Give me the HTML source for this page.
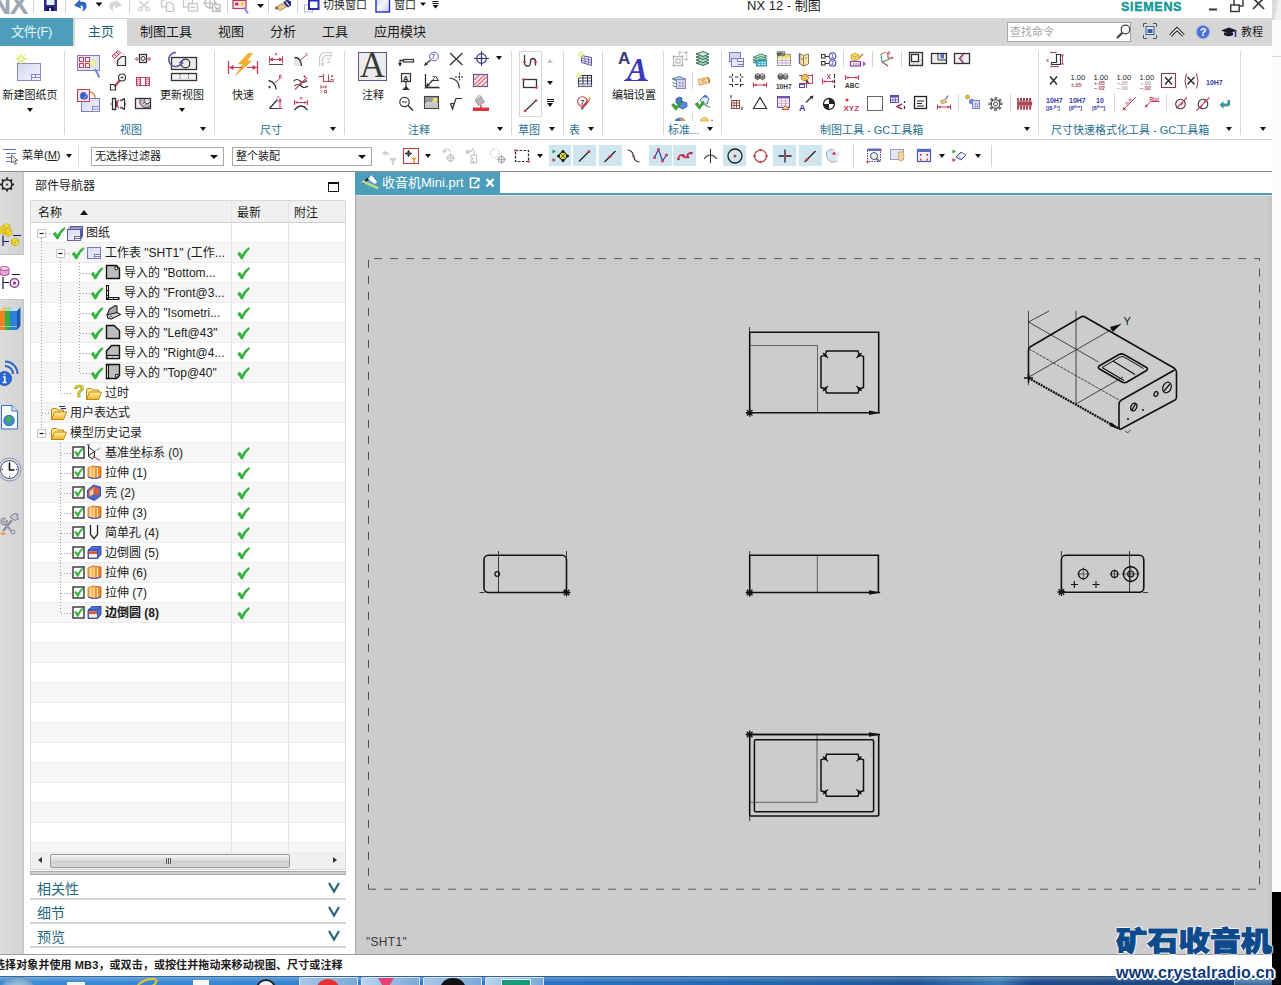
<!DOCTYPE html>
<html lang="zh-CN">
<head>
<meta charset="utf-8">
<title>NX 12 - 制图</title>
<style>
*{box-sizing:border-box;margin:0;padding:0}
html,body{width:1281px;height:985px;overflow:hidden;background:#fff}
body{position:relative;font-family:"Liberation Sans","Noto Sans CJK SC",sans-serif;font-size:12px;color:#1a1a1a}
.abs{position:absolute}
svg{position:absolute;overflow:visible}
/* title bar */
#title{left:0;top:0;width:1272px;height:18px;background:#fff}
#tabbar{left:0;top:18px;width:1272px;height:28px;background:#d6d6d6}
#filetab{left:0;top:18px;width:73px;height:28px;background:#4d9ebb;color:#e8f6fb;font-size:13px;line-height:27px;padding-left:11px;letter-spacing:-.3px}
#hometab{left:75px;top:19px;width:52px;height:28px;background:#fff;color:#1d5f78;font-size:13px;line-height:26px;text-align:center}
.rtab{top:18px;height:28px;font-size:13px;line-height:27px;color:#1a1a1a;white-space:nowrap}
#ribbon{left:0;top:46px;width:1272px;height:94px;background:#fff;border-bottom:1px solid #d0d0d0}
.gsep{top:51px;width:1px;height:84px;background:#d9d9d9}
.glabel{top:123px;font-size:11px;line-height:14px;color:#1f6f8f;white-space:nowrap}
.blabel{font-size:11px;line-height:14px;color:#1a1a1a;white-space:nowrap;text-align:center}
.dd{width:0;height:0;border-left:3.5px solid transparent;border-right:3.5px solid transparent;border-top:4px solid #111}
#selbar{left:0;top:140px;width:1272px;height:32px;background:#fff;border-bottom:1px solid #8a8a8a}
.combo{top:147px;height:19px;border:1px solid #a9a9a9;background:#fff;font-size:12px;line-height:17px;padding-left:3px;white-space:nowrap}
.hl{background:#cfe6ee}
#resbar{left:0;top:172px;width:24px;height:782px;background:linear-gradient(90deg,#dcdcdc,#d2d2d2)}
#nav{left:24px;top:172px;width:331px;height:782px;background:#fff}
#gfx{left:355px;top:195px;width:917px;height:759px;background:#ccc}
#gtabline{left:355px;top:193px;width:917px;height:2px;background:#4d9ebb}
#gtab{left:355px;top:172px;width:145px;height:22px;background:#4d9ebb;color:#fff;font-size:13px;line-height:21px;white-space:nowrap}
#status{left:0;top:954px;width:1272px;height:22px;background:#fff;border-top:1px solid #9c9c9c;font-size:11px;font-weight:bold;line-height:20px;white-space:nowrap;letter-spacing:.1px}
#taskbar{left:0;top:976px;width:1272px;height:9px;background:linear-gradient(#1a3a5a 0,rgba(255,255,255,.25) 14%,rgba(255,255,255,0) 70%),linear-gradient(90deg,#3d8cd6 0,#3582cf 25%,#2a72c0 45%,#2464ac 62%,#1f5596 72%,#3c7cb8 78.500%,#1c4a86 81%,#1b4882 100%);overflow:hidden}
#rightstrip{left:1272px;top:0;width:9px;height:892px;background:#fcfcfc}
.trow{left:31px;width:314px;height:20px}
.tr-a{background:#fff}
.tr-b{background:#f6f6f6}
.tt{font-size:12px;line-height:22px;white-space:nowrap;color:#1a1a1a}
</style>
</head>
<body>
<div class="abs" id="title"></div>
<div class="abs" id="tabbar"></div>
<div class="abs" id="filetab">文件(F)</div>
<div class="abs" id="hometab">主页</div>
<div class="abs rtab" style="left:140px">制图工具</div>
<div class="abs rtab" style="left:218px">视图</div>
<div class="abs rtab" style="left:270px">分析</div>
<div class="abs rtab" style="left:322px">工具</div>
<div class="abs rtab" style="left:374px">应用模块</div>

<!-- ===== title bar ===== -->
<div class="abs" style="left:-9px;top:-11px;font-size:28px;font-weight:bold;color:#9ba8b3;line-height:31px;letter-spacing:-1.500px">NX</div>
<div class="abs" style="left:323px;top:-3.500px;font-size:11px;line-height:16px;white-space:nowrap;color:#222">切换窗口</div>
<div class="abs" style="left:394px;top:-3.500px;font-size:11px;line-height:16px;white-space:nowrap;color:#222">窗口</div>
<div class="abs" style="left:747px;top:-2.500px;font-size:13px;line-height:16px;white-space:nowrap;color:#222">NX 12 - 制图</div>
<div class="abs" style="left:1121px;top:0;font-size:12.500px;font-weight:bold;line-height:14px;letter-spacing:.7px;color:#0f9696;-webkit-text-stroke:.4px #0f9696;white-space:nowrap">SIEMENS</div>
<svg id="tsvg" width="1272" height="18" style="left:0;top:0">
 <g stroke="#d0d0d0" stroke-width="1"><path d="M33.5 0v13M65.5 0v13M129.5 0v13M227.5 0v13M268.5 0v13M297.5 0v13"/></g>
 <!-- save -->
 <path d="M44 0h13v11h-13z" fill="#2b2b8c"/><rect x="46.5" y="0" width="8" height="5" fill="#e8ecff"/><rect x="47" y="7" width="7" height="4" fill="#10104a"/><rect x="49" y="8" width="2" height="3" fill="#c8d0ff"/>
 <!-- undo -->
 <path d="M74 5.500 L80 -.5 L80.500 2 Q86.500 1 86.500 6 Q86.500 9.500 82 11.500 Q84 8 82.500 6 Q81.500 5 80.500 5.500 L81 8.500Z" fill="#2e62c8"/>
 <path d="M95.5 2.5h7l-3.5 4z" fill="#111"/>
 <!-- redo grey -->
 <path d="M122 5.500 L116 -.5 L115.500 2 Q109.500 1 109.500 6 Q109.500 9.500 114 11.500 Q112 8 113.500 6 Q114.500 5 115.500 5.500 L115 8.500Z" fill="#d4d4d4"/>
 <!-- cut -->
 <g stroke="#cecece" stroke-width="1.3" fill="none"><path d="M139 1l8 7M149 1l-8 7"/><circle cx="140.500" cy="9" r="1.800"/><circle cx="147.500" cy="9" r="1.800"/></g>
 <!-- copy -->
 <g stroke="#c4c4c4" stroke-width="1.200" fill="#fafafa"><path d="M161.500 0v7h5M161.500 0h4"/><path d="M166.500 2.500h4.500l2.500 2.500v6.500h-7z"/></g>
 <!-- paste -->
 <g stroke="#c4c4c4" stroke-width="1.200" fill="#fafafa"><rect x="183.500" y="-2" width="9" height="9"/><rect x="188.500" y="3.500" width="9" height="7.500"/><path d="M190.500 7.500h5" /></g>
 <!-- move -->
 <g stroke="#b8b8b8" stroke-width="1.200" fill="none"><circle cx="210" cy="3" r="5"/><path d="M210 -3v12M203 3h14"/><rect x="212.500" y="4.500" width="7.500" height="7" fill="#fafafa"/><path d="M214.500 6.500l3.500 3.500M218 7.500v2.500h-2.500"/></g>
 <g transform="translate(0 1.500)"><!-- prefs icon -->
 <rect x="233" y="-1" width="13" height="8" fill="#f4e8f0" stroke="#b03a5a" stroke-width="1.200"/><rect x="235" y="1" width="3.500" height="3" fill="#d04040"/><rect x="240.500" y="1" width="3.500" height="3" fill="#f0d040"/><path d="M244 6l4 6" stroke="#8a8ad8" stroke-width="2"/>
 <path d="M257 2.500h7l-3.500 4z" fill="#111"/>
 <!-- brush -->
 <path d="M276 6l6-4 5 3-7 4z" fill="#e8c888" stroke="#9a7a4a" stroke-width=".8"/><path d="M283 1l4-3 4 2 0 4-3 2z" fill="#2a2a7a"/><path d="M286 0l3 4" stroke="#fff" stroke-width="1.200"/><circle cx="276.500" cy="6.500" r="1.500" fill="#7a5a3a"/>
 <!-- switch window -->
 <rect x="304.500" y="3.500" width="8" height="7" fill="#fff" stroke="#b8b8c8" stroke-width="1"/><rect x="309" y="-1" width="9.500" height="8.500" fill="#fff" stroke="#2a2ab0" stroke-width="2"/>
 </g><!-- window -->
 <defs><linearGradient id="gw" x1="0" y1="0" x2="1" y2="1"><stop offset="0" stop-color="#c8d4ff"/><stop offset=".5" stop-color="#f4f7ff"/><stop offset="1" stop-color="#b8c8ff"/></linearGradient></defs>
 <rect x="376" y="-2" width="13.500" height="14" fill="url(#gw)" stroke="#2a2ac8" stroke-width="1.400"/>
 <path d="M420 2.500h6l-3 3.500z" fill="#111"/>
 <path d="M432.500 1.500h6M432.500 3.500h6" stroke="#111" stroke-width="1"/><path d="M432.500 5h6l-3 3.500z" fill="#111"/>
 <g transform="translate(0 1)"><!-- window controls -->
 <path d="M1209 8.500h8" stroke="#333" stroke-width="2"/>
 <rect x="1234" y="-2" width="9" height="7" fill="#fff" stroke="#333" stroke-width="1.400"/><rect x="1230.700" y="4" width="8.500" height="6.500" fill="#fff" stroke="#333" stroke-width="1.400"/>
 <path d="M1253 -3l11 11M1264 -3l-11 11" stroke="#333" stroke-width="1.700"/></g>
</svg>
<!-- ===== tab bar right side ===== -->
<div class="abs" style="left:1007px;top:22px;width:124px;height:20px;background:#fff;border:1px solid #a8a8a8;font-size:11px;line-height:18px;color:#a6a6a6;padding-left:2px">查找命令</div>
<div class="abs" style="left:1241px;top:24px;font-size:11px;line-height:16px;color:#1a1a1a;white-space:nowrap">教程</div>
<svg width="1272" height="46" style="left:0;top:0">
 <g fill="none" stroke="#444" stroke-width="1.300"><circle cx="1125.500" cy="29.500" r="4.300" fill="#fff"/><path d="M1122.300 32.700l-5.300 5.300" stroke-width="2.200"/></g>
 <g fill="none" stroke="#555" stroke-width="1"><path d="M1143.500 27v-3.500h3.500M1153 23.500h3.500v3.500M1156.500 35v3.500h-3.500M1147 38.500h-3.500v-3.500"/></g>
 <rect x="1146" y="26.500" width="8" height="8" fill="#e8eef8" stroke="#3a5a9a" stroke-width="1"/><rect x="1147.500" y="29" width="5" height="4" fill="#3a5aa8"/>
 <path d="M1170.500 35.500l6.500-6.500 6.500 6.500" fill="none" stroke="#222" stroke-width="3.400"/><path d="M1170.500 35.500l6.500-6.500 6.500 6.500" fill="none" stroke="#fff" stroke-width="1.400"/>
 <circle cx="1203" cy="32" r="6.500" fill="#4a6fd0" stroke="#8fa4e8" stroke-width="1"/>
 <path d="M1221 30.500l8-3 8 3-8 3z" fill="#1a1a2a"/><path d="M1224 32.500v2.500q5 2.500 9 0v-2.500" fill="#1a1a2a"/><path d="M1235.500 31v6" stroke="#2a2a9a" stroke-width="1.500"/>
</svg>
<div class="abs" style="left:1199px;top:25px;width:8px;font-size:11px;font-weight:bold;line-height:14px;color:#fff;text-align:center">?</div>
<div class="abs" id="ribbon"></div>

<!-- ===== ribbon labels ===== -->
<div class="abs gsep" style="left:64px"></div>
<div class="abs gsep" style="left:214px"></div>
<div class="abs gsep" style="left:344px"></div>
<div class="abs gsep" style="left:511px"></div>
<div class="abs gsep" style="left:563px"></div>
<div class="abs gsep" style="left:602px"></div>
<div class="abs gsep" style="left:663px"></div>
<div class="abs gsep" style="left:721px"></div>
<div class="abs gsep" style="left:1038px"></div>
<div class="abs gsep" style="left:1240px"></div>
<div class="abs blabel" style="left:0;top:88px;width:60px">新建图纸页</div>
<div class="abs blabel" style="left:152px;top:88px;width:60px">更新视图</div>
<div class="abs blabel" style="left:213px;top:88px;width:60px">快速</div>
<div class="abs blabel" style="left:343px;top:88px;width:60px">注释</div>
<div class="abs blabel" style="left:604px;top:88px;width:60px">编辑设置</div>
<div class="abs glabel" style="left:120px">视图</div>
<div class="abs glabel" style="left:260px">尺寸</div>
<div class="abs glabel" style="left:408px">注释</div>
<div class="abs glabel" style="left:518px">草图</div>
<div class="abs glabel" style="left:569px">表</div>
<div class="abs glabel" style="left:668px">标准...</div>
<div class="abs glabel" style="left:820px">制图工具 - GC工具箱</div>
<div class="abs glabel" style="left:1051px">尺寸快速格式化工具 - GC工具箱</div>
<div class="abs dd" style="left:27px;top:108px"></div>
<div class="abs dd" style="left:179px;top:108px"></div>
<div class="abs dd" style="left:200px;top:127px"></div>
<div class="abs dd" style="left:330px;top:127px"></div>
<div class="abs dd" style="left:497px;top:127px"></div>
<div class="abs dd" style="left:496px;top:56px"></div>
<div class="abs dd" style="left:549px;top:127px"></div>
<div class="abs dd" style="left:588px;top:127px"></div>
<div class="abs dd" style="left:707px;top:127px"></div>
<div class="abs dd" style="left:1024px;top:127px"></div>
<div class="abs dd" style="left:1226px;top:127px"></div>
<div class="abs dd" style="left:1260px;top:127px"></div>
<div class="abs dd" style="left:1260px;top:158px"></div>
<!-- sketch gallery -->
<div class="abs" style="left:519px;top:51px;width:23px;height:66px;border:1px solid #cfd9e0"></div>
<div class="abs dd" style="left:547px;top:59px;border-top:none;border-bottom:4px solid #c4c4c4"></div>
<div class="abs dd" style="left:547px;top:81px"></div>
<div class="abs" style="left:547px;top:99px;width:7px;height:1px;background:#111"></div>
<div class="abs" style="left:547px;top:101px;width:7px;height:1px;background:#111"></div>
<div class="abs dd" style="left:547px;top:103px"></div>
<!-- ===== ribbon icons A ===== -->
<svg width="1272" height="140" style="left:0;top:0">
<defs>
 <linearGradient id="gsheet" x1="0" y1="0" x2="1" y2="1"><stop offset="0" stop-color="#d4d8f0"/><stop offset="1" stop-color="#f3f4fb"/></linearGradient>
 <radialGradient id="gstar"><stop offset="0" stop-color="#ffffd0"/><stop offset=".5" stop-color="#e0e878"/><stop offset="1" stop-color="#c8d860" stop-opacity=".6"/></radialGradient>
 <path id="star8" d="M0-7L1.300-2.500L5.500-5L2.500-1.300L7 0L2.500 1.300L5 5.500L1.300 2.500L0 7L-1.300 2.500L-5 5L-2.500 1.300L-7 0L-2.500-1.300L-5.500-5L-1.300-2.500Z" fill="url(#gstar)"/>
</defs>
<!-- new sheet -->
<rect x="17.500" y="63.500" width="23" height="17" fill="url(#gsheet)" stroke="#8888c4"/>
<rect x="31.500" y="74.500" width="9" height="6" fill="#eef0fa" stroke="#8888c4"/><path d="M31.500 77.500h9M35.500 74.500v3" stroke="#8888c4"/>
<use href="#star8" x="21" y="59"/>
<!-- view wizard -->
<rect x="77.500" y="55.500" width="22" height="15" fill="#e2e5f4" stroke="#7c7cc0"/>
<g fill="#fbeef0" stroke="#c0405a" stroke-width="1"><rect x="79.500" y="57.500" width="4" height="4"/><rect x="85.500" y="57.500" width="4" height="4"/><rect x="79.500" y="63.500" width="4" height="4"/><rect x="85.500" y="63.500" width="4" height="4"/></g>
<use href="#star8" x="93" y="63" transform="translate(93 63) scale(.75) translate(-93 -63)"/>
<path d="M95 69l4.500 8.500" stroke="#7a8ad8" stroke-width="2.200"/>
<!-- base view -->
<rect x="81.500" y="98.500" width="18" height="13" fill="url(#gsheet)" stroke="#7c7cc0"/>
<rect x="92.500" y="106.500" width="7" height="5" fill="#eef0fa" stroke="#8888c4"/><path d="M92.500 109h7" stroke="#8888c4"/>
<path d="M88 92a6 6 0 0 1 7 6" fill="none" stroke="#e0a070" stroke-width="2"/>
<rect x="77.500" y="89.500" width="12" height="12" fill="#f6e4e8" stroke="#c0405a"/>
<path d="M80 96q0-4 4-4 2 0 2 2 2 0 2 2.500 0 3-4 3-4 0-4-3.500z" fill="#3a62c8"/><path d="M84 98l3-2.500" stroke="#9ab4f0" stroke-width="1"/>
<!-- small view icons col1 x=118 -->
<g>
 <path d="M112 56l6-5.500 2.500 2.500-6 5.500z" fill="#f8dde0" stroke="#c0405a" stroke-width="1"/><path d="M114 54l2.500 2.500M116 52l2.500 2.500" stroke="#c0405a" stroke-width="1"/>
 <path d="M117.500 60.500l4-4h4v9h-8z" fill="#f0f0f0" stroke="#333" stroke-width="1.200"/><path d="M113.500 59.500l4 5.500M121.500 52.500l4 4" stroke="#c0405a" stroke-width=".8" stroke-dasharray="1.500 1"/>
</g>
<g>
 <path d="M115 86l6-7" stroke="#c0405a" stroke-width="2.400"/>
 <circle cx="122" cy="77.500" r="3.500" fill="#fff" stroke="#333" stroke-width="1.200"/><path d="M120.500 77.500h3M122 76v3" stroke="#333" stroke-width=".8"/>
 <path d="M110.500 84.500h3l2 2v3.500h-5z" fill="#fff" stroke="#333" stroke-width="1.200"/>
</g>
<g>
 <path d="M110.500 104h2M124 104h2" stroke="#333" stroke-width="1.200"/>
 <path d="M112.500 98.500h3v11h-3z" fill="#fff" stroke="#333" stroke-width="1.300"/><path d="M115.500 100.500q2.500 3.500 0 7" fill="none" stroke="#333" stroke-width="1.300"/>
 <path d="M118.500 99.500q-2.500 4.500 0 9" fill="none" stroke="#c0405a" stroke-width="1.300"/><path d="M120.500 99.500q2.500 4.500 0 9" fill="none" stroke="#c0405a" stroke-width="1.300"/>
 <path d="M121 101l2.500-2h1v10h-1l-2.500-2" fill="#fff" stroke="#333" stroke-width="1.300"/>
</g>
<!-- col2 x=143 -->
<g>
 <rect x="139.500" y="54.500" width="7" height="8" fill="#fff" stroke="#333" stroke-width="1.300"/><circle cx="143" cy="58.500" r="2" fill="#eee" stroke="#333" stroke-width="1"/>
 <path d="M135.500 59h4M146.500 59h4" stroke="#c0405a" stroke-width="1.200"/><path d="M137.500 57l-2 2 2 2M148.500 57l2 2-2 2" fill="none" stroke="#c0405a" stroke-width="1"/>
</g>
<g>
 <rect x="136.500" y="77.500" width="13" height="8" fill="#f3c6cc" stroke="#c0405a"/><rect x="140.500" y="77.500" width="5" height="8" fill="#fff" stroke="#c0405a"/>
 <path d="M137 79.500h3M137 81.500h3M137 83.500h3M146 79.500h3M146 81.500h3M146 83.500h3" stroke="#c0405a" stroke-width=".7" stroke-dasharray="1 1"/>
</g>
<g>
 <rect x="135.500" y="98.500" width="15" height="10" fill="#f5f0f2" stroke="#333" stroke-width="1.300"/>
 <path d="M140.500 99a6 6 0 0 0 9.500 7v-7z" fill="#cbb8c8"/><path d="M140.500 99a6 6 0 0 0 9.500 7" fill="none" stroke="#444" stroke-width="1"/><path d="M144.500 99a3 3 0 0 0 5.500 3" fill="#fff" stroke="#444" stroke-width="1"/>
 <path d="M143 104l3-3M145.500 105.500l3-3" stroke="#6a4a7a" stroke-width=".8"/>
</g>
<!-- update views -->
<rect x="171.500" y="57.500" width="25" height="12" fill="#ececec" stroke="#333" stroke-width="1.300"/>
<circle cx="185.500" cy="63.500" r="4.300" fill="none" stroke="#333" stroke-width="1.300"/>
<path d="M176 52.500a7 7 0 1 0 5.500 11" fill="none" stroke="#5a5ab0" stroke-width="1.500"/><path d="M178.500 63l4-3.500 1 4.500z" fill="#5a5ab0"/>
<rect x="171.500" y="73.500" width="25" height="7" fill="#f2f2f2" stroke="#333" stroke-width="1.300"/><path d="M180 74v6M188.500 74v6" stroke="#555" stroke-width="1" stroke-dasharray="1.500 1.500"/>
<!-- rapid dim -->
<path d="M248 53.500h4.500l-5.500 7.500h4.500l-16 14.500 7.500-11.500h-4.500z" fill="#f2b232" stroke="#e89820" stroke-width=".6"/>
<path d="M228.500 61v13M257.500 61v13" stroke="#c0405a" stroke-width="1.300"/><path d="M229 67.500h13M247 67.500h10" stroke="#c0405a" stroke-width="1.200"/>
<path d="M229 67.500l4.500-2.500v5zM257 67.500l-4.500-2.500v5z" fill="#c0405a"/>
<!-- dim small col1 x=276 -->
<g stroke="#c0405a" fill="none" stroke-width="1"><path d="M269.500 56v7M282.500 56v7M270 59.500h12"/><path d="M270 59.500l2.500-1.500v3zM282 59.500l-2.500-1.500v3z" fill="#c0405a"/><path d="M275 53l2 2.500M277 53l-2 2.500" stroke-width=".8"/></g>
<path d="M269 64.500h14" stroke="#444" stroke-width="1"/>
<g><path d="M268.500 80.500q7 1.500 7.500 9" fill="none" stroke="#333" stroke-width="1.300"/><path d="M274.500 83l5-4" stroke="#c0405a" stroke-width="1"/><path d="M279.500 75v4M279.500 75h1.500q1 1 0 2h-1.500l2 2" fill="none" stroke="#c0405a" stroke-width=".8"/><path d="M268 87h3M269.500 85.500v3" stroke="#333" stroke-width=".8"/></g>
<g><path d="M269.500 108.500l8-9M269.500 108.500h8.500" fill="none" stroke="#333" stroke-width="1.200"/><path d="M280 99v9.500M277.500 108.500h5" stroke="#c0405a" stroke-width="1.100"/><path d="M280 98l-2 3.500h4z" fill="#c0405a"/><path d="M276.500 98q1.500-2 3-1" fill="none" stroke="#c0405a" stroke-width=".9"/></g>
<!-- dim small col2 x=300 -->
<g><path d="M294 57h4q3 1 3 5v4h-7z" fill="#e4e4e4"/><path d="M294.500 57.500q6.500 0 7 8.500" fill="none" stroke="#333" stroke-width="1.300"/><path d="M300 60.500l5-4.500" stroke="#c0405a" stroke-width="1"/><path d="M307.500 53.500q-2-1-2 1t2 1" fill="none" stroke="#c0405a" stroke-width=".8"/></g>
<g><path d="M293.500 81q3.500-3 6.500 0t7-.500" fill="none" stroke="#333" stroke-width="1.100"/><path d="M294.500 86q3.500-3 6.500 0t7 0" fill="none" stroke="#333" stroke-width="1.100"/><path d="M295 89.500l12-12" stroke="#c0405a" stroke-width="1.100"/><path d="M299 85.500l3.500-1-2.500-2.500z" fill="#c0405a"/><path d="M303 76.500h3M304.500 75v3" stroke="#c0405a" stroke-width=".8"/></g>
<g><path d="M294.500 100v5M307.500 100v5M295 102.500h12" stroke="#c0405a" stroke-width="1.100" fill="none"/><path d="M295 102.500l2.500-1.500v3zM307 102.500l-2.500-1.500v3z" fill="#c0405a"/><path d="M300 97l2 2.500M302 97l-2 2.500" stroke="#c0405a" stroke-width=".8"/><path d="M294.500 110q6.500-8 13 0" fill="none" stroke="#333" stroke-width="1.400"/></g>
<!-- dim small col3 x=326 -->
<g stroke="#c9c9c9" fill="none" stroke-width="1.200"><path d="M319.500 66v-7q0-6.500 7-6.500h6"/><path d="M322.500 66v-6q0-4.500 5-4.500h5"/><path d="M321 63l1.500 3 1.500-3M329 54l3 1.500-3 1.500" stroke-width=".9"/><path d="M330.500 58.500h-3l1.500 2-1.500 2h3" stroke-width=".9"/></g>
<g stroke="#b04a5a" fill="none" stroke-width="1.100"><path d="M318.500 76.500h5v5h5v-7M323.500 76.500v-2.500M328.500 81.500h3M321 85.500v3M326 85.500v3M321 87h5"/><path d="M331 75l2 2M333 75l-2 2M320.500 90.500l2 2M322.500 90.500l-2 2" stroke-width=".8"/><rect x="331" y="79.500" width="2.200" height="2.200" stroke-width=".8"/><rect x="324.500" y="90.500" width="2.200" height="2.200" stroke-width=".8"/></g>
</svg>
<!-- ===== ribbon icons B ===== -->
<div class="abs" style="left:358px;top:52px;width:29px;height:29px;background:#ececec;border:1px solid #55558a;font-family:'Liberation Serif',serif;font-size:35px;line-height:25px;text-align:center;color:#3a3a3a;overflow:hidden">A</div>
<div class="abs" style="left:618px;top:49px;font-size:17px;font-weight:bold;line-height:20px;color:#3a3a78">A</div>
<div class="abs" style="left:627px;top:52.500px;font-family:'Liberation Serif',serif;font-style:italic;font-weight:bold;font-size:31px;line-height:34px;color:#3a3ab8">A</div>
<div class="abs" style="left:624px;top:80px;width:24px;height:1px;background:#3a3ab8"></div>
<svg width="1272" height="140" style="left:0;top:0">
<!-- annotation col1 x=406 -->
<g><rect x="403.500" y="59.500" width="10" height="2.500" fill="#fff" stroke="#333" stroke-width="1.200"/><path d="M403.500 60.500h-3.500v5" fill="none" stroke="#333" stroke-width="1.300"/><path d="M400 66.500l-2-3.500h4z" fill="#333"/></g>
<g><rect x="401.500" y="73.500" width="9" height="8" fill="#f0f0f0" stroke="#333" stroke-width="1.200"/><path d="M406 81.500v7" stroke="#333" stroke-width="1.200"/><path d="M403 89h6l-3-3z" fill="#333"/><path d="M402.500 89.500h7" stroke="#333" stroke-width="1"/></g>
<g><circle cx="404.500" cy="102" r="4.700" fill="#fff" stroke="#333" stroke-width="1.200"/><path d="M402 102h5" stroke="#333" stroke-width="1"/><path d="M408 105.500l5 5" stroke="#333" stroke-width="1.500"/></g>
<!-- col2 x=431 -->
<g><circle cx="434" cy="56.500" r="4.300" fill="#fff" stroke="#5a5ab8" stroke-width="1"/><path d="M430.500 60l-5.500 5" stroke="#333" stroke-width="1.200"/><path d="M424 66l1.500-4 2.500 2.500z" fill="#333"/></g>
<g><path d="M425.500 74v13.500h14" fill="none" stroke="#333" stroke-width="1.300"/><path d="M424 88.500h16" stroke="#bbb" stroke-width="1"/><path d="M426.500 86.500l7-7" stroke="#333" stroke-width="1.200"/><path d="M426 87l1-4 3 3z" fill="#333"/><path d="M431.500 80.500h7l-3-4.500" fill="#eee" stroke="#333" stroke-width="1"/></g>
<g><rect x="424.500" y="96.500" width="14" height="12" fill="#9a9a9a" stroke="#444" stroke-width="1.100"/><path d="M425 108v-4q3-4 6-1 3-4 7 1v4z" fill="#c4c4c4"/><path d="M425 105q3-4 6-1.500 3-4 7 .5" fill="none" stroke="#e8e8e8" stroke-width=".8"/><circle cx="435" cy="100" r="2.300" fill="#f0e060"/></g>
<!-- col3 x=456 -->
<path d="M450 53l12.500 12M462.500 53l-12.500 12" stroke="#333" stroke-width="1.300"/>
<g><path d="M449.500 78q9.500 1 10 10.500" fill="none" stroke="#333" stroke-width="1.200"/><path d="M459.500 72.500v9M455 77h9" stroke="#333" stroke-width="1" stroke-dasharray="2 1"/></g>
<path d="M450.500 103.500h3.500l-1.500 5.500-2-5.500M452.500 109l3.500-10.500h6" fill="none" stroke="#333" stroke-width="1.200"/>
<!-- col4 x=481 -->
<g fill="none" stroke="#3a3a78" stroke-width="1.200"><circle cx="481.500" cy="58.500" r="4.800"/><path d="M481.500 51v15M474 58.500h15"/></g><circle cx="481.500" cy="58.500" r="1.200" fill="#3a3a78"/>
<g><rect x="473.500" y="74.500" width="14" height="12" fill="#fbe6ea" stroke="#5a5a98" stroke-width="1.200"/><path d="M474 80l5.500-5M474 85l10.500-10M476.500 86.500l10.500-10M481.500 86.500l5.500-5.500" stroke="#e06a7a" stroke-width="1.100"/></g>
<g><path d="M475 100l6-3 3.500 5-6 3.500z" fill="#b8b8b8" stroke="#888" stroke-width=".8"/><path d="M476 98q3-4 6-1" fill="none" stroke="#999" stroke-width="1"/><path d="M481 105v3" stroke="#d84050" stroke-width="1.500"/><rect x="473" y="107.500" width="16" height="3.500" fill="#e0303c"/></g>
<text x="431.500" y="59" font-family="Liberation Sans,sans-serif" font-size="6.500" font-weight="bold" fill="#5a5ab8">7</text>
<text x="403" y="80.500" font-family="Liberation Sans,sans-serif" font-size="7.500" font-weight="bold" fill="#333">A</text>
<text x="432.500" y="79.500" font-family="Liberation Sans,sans-serif" font-size="4.500" font-weight="bold" fill="#333">7</text>
<!-- sketch x=530 -->
<g><path d="M524.500 55v7.500q0 3.500 3 3.500t3-3.500v-1q0-3 2.500-3t2.500 3v4" fill="none" stroke="#333" stroke-width="1.300"/><circle cx="524.500" cy="62" r="1.300" fill="#d03a48"/><circle cx="535.500" cy="62" r="1.300" fill="#d03a48"/></g>
<g><rect x="523.500" y="79.500" width="13" height="8" fill="#fff" stroke="#333" stroke-width="1.300"/><circle cx="523.500" cy="79.500" r="1.300" fill="#d03a48"/><circle cx="536.500" cy="87.500" r="1.300" fill="#d03a48"/></g>
<g><path d="M525 111l11-10.500" stroke="#333" stroke-width="1.200"/><circle cx="525" cy="111" r="1.300" fill="#d03a48"/><circle cx="536" cy="100.500" r="1.300" fill="#d03a48"/></g>
<!-- table x=585 -->
<g><path d="M581.500 55.500l10 2v8l-10-3z" fill="#f2eef8" stroke="#5a5a9a" stroke-width="1"/><path d="M581.500 58l10 2.500M581.500 60.500l10 2.500M585 56v7.500M588.500 57v7.500" stroke="#7a6ab0" stroke-width=".9"/><use href="#star8" transform="translate(581 54.500) scale(.6)"/></g>
<g><rect x="578.500" y="75.500" width="13" height="11" fill="#fff" stroke="#333" stroke-width="1.100"/><path d="M578.500 78h13M578.500 81h13M578.500 84h13M583 75.500v11M587.500 75.500v11" stroke="#3a3a5a" stroke-width="1"/><path d="M578.500 84h13v2.500h-13z" fill="#b8d0e8" opacity=".7"/><use href="#star8" transform="translate(578.500 75.500) scale(.55)"/></g>
<g><circle cx="582.500" cy="101.500" r="4.800" fill="#fff" stroke="#c0405a" stroke-width="1.100"/><path d="M582 108l7.500-9" stroke="#c0405a" stroke-width="2.200"/><path d="M588 100.500l2.500-3" stroke="#e8c070" stroke-width="2"/><path d="M581.500 109.500l1.500-2" stroke="#555" stroke-width="1.500"/></g>
<text x="580.300" y="104.500" font-family="Liberation Sans,sans-serif" font-size="7.500" font-weight="bold" fill="#444">7</text>
<!-- standard group col1 x=679 col2 x=703 -->
<g fill="none" stroke="#b4b4b4" stroke-width="1.100"><rect x="679.500" y="52.500" width="7" height="7" stroke-dasharray="1.500 1"/><rect x="673.500" y="56.500" width="9" height="9" fill="#fafafa"/><rect x="676" y="59" width="4" height="4"/></g>
<g fill="#b4b4b4"><rect x="672.500" y="55.500" width="2" height="2"/><rect x="681.500" y="55.500" width="2" height="2"/><rect x="672.500" y="64.500" width="2" height="2"/><rect x="681.500" y="64.500" width="2" height="2"/><rect x="678.500" y="51.500" width="2" height="2"/><rect x="685.500" y="51.500" width="2" height="2"/><rect x="685.500" y="58.500" width="2" height="2"/></g>
<g stroke="#3a6a5a" stroke-width="1" fill="#9ad0b8"><path d="M696 63l7-2.500 6 2.500-6 2.500z"/><path d="M696 60l7-2.500 6 2.500-6 2.500z" fill="#b8e0c8"/><path d="M696 57l7-2.500 6 2.500-6 2.500z" fill="#9ad0b8"/><path d="M696 54l7-2.500 6 2.500-6 2.500z" fill="#c8e8d8"/></g>
<g><path d="M672.500 79l6.500-2.500 6.500 2.500-6.500 2.500z" fill="#b8d0e0" stroke="#4a7a8a" stroke-width=".9"/><path d="M672.500 82.500l4 1.500M672.500 85.500l4 1.500M672.500 79l4 1.500" stroke="#4a7a8a" stroke-width="1"/><rect x="676.500" y="79.500" width="9" height="9" fill="#d8d4ee" stroke="#8a8ac0" stroke-width="1"/><path d="M679 83h1.500M682 83h1.500M679 86h1.500M682 86h1.500" stroke="#5a5a98" stroke-width="1.200"/></g>
<path d="M692.500 72v17M692.500 114v7" stroke="#d4d4d4"/>
<g><path d="M698.500 79.500l9-2 1.500 5-9.500 2.500z" fill="#fbe6c0" stroke="#e0a050" stroke-width="1.100"/><path d="M701 80.500l4.500-1M701.500 82.500l4.500-1" stroke="#d09040" stroke-width="1"/><path d="M708 78q2 1 1.500 5" fill="none" stroke="#b07030" stroke-width="1.200"/></g>
<g><path d="M676 99l3-2 3 1v4l-3 2-3-1z" fill="#4a7ad0" stroke="#2a4a9a" stroke-width=".7"/><path d="M679 104l4-2.500 4 1.500v3.500l-4 2.500-4-1.500z" fill="#5a8ae0" stroke="#2a4a9a" stroke-width=".7"/><path d="M671.500 105l2.500-1.500 2 3 4-5.500 1.500 1.500-5.500 8z" fill="#3aa83a" stroke="#1a7a1a" stroke-width=".5"/></g>
<g><path d="M700 100l4-4 5 2.500-2 5.500-4 .5z" fill="#e8eef8" stroke="#4a6ab8" stroke-width="1"/><path d="M702.500 97.500l3-2.500 2 2" fill="#4a7ad0" stroke="#2a4a9a" stroke-width=".7"/><path d="M703 104l7 3.500" stroke="#8ab08a" stroke-width="1.500"/><path d="M695 104l2.500-1.500 2 3 3.500-4.500 1.500 1.500-5 7z" fill="#3aa83a" stroke="#1a7a1a" stroke-width=".5"/></g>
<path d="M674.500 121q1-3 5-3.500t6 3.500z" fill="#4a7ad8"/><path d="M679 118q4-.500 6.500 3h-4z" fill="#e8a040"/>
<path d="M700.500 121v-1.500l4-2.500 4 2.500v1.500z" fill="#f4d870" stroke="#c8a030" stroke-width=".7"/><path d="M711 121l1-2 1 2z" fill="#c05050"/>
</svg>
<!-- ===== ribbon icons C : GC toolbox ===== -->
<svg width="1272" height="140" style="left:0;top:0" font-family="Liberation Sans,sans-serif">
<defs>
 <g id="bino"><ellipse cx="-2.500" cy="0" rx="2.600" ry="3" fill="#666" stroke="#333" stroke-width=".6"/><ellipse cx="2.500" cy="0" rx="2.600" ry="3" fill="#888" stroke="#333" stroke-width=".6"/><ellipse cx="-2.500" cy="-2" rx="2" ry="1.200" fill="#aaa"/><ellipse cx="2.500" cy="-2" rx="2" ry="1.200" fill="#bbb"/></g>
 <g id="dimh"><path d="M-6.500-2.500v5M6.500-2.500v5M-6 0h12" stroke="#c0405a" stroke-width="1.100" fill="none"/><path d="M-6 0l2.500-1.500v3zM6 0l-2.500-1.500v3z" fill="#c0405a"/></g>
</defs>
<!-- row1 y=59 -->
<g><rect x="729.500" y="52.500" width="11" height="9" fill="#d4daf0" stroke="#7c7cc0"/><rect x="731.500" y="58.500" width="12" height="8" fill="#e4e8f8" stroke="#7c7cc0"/><rect x="737.500" y="58.500" width="6" height="3" fill="#f4f6ff" stroke="#7c7cc0"/><path d="M738 64.500h5.500" stroke="#7c7cc0"/></g>
<g stroke="#3a7a6a" stroke-width=".9"><path d="M753 57.500l7.500-3.500 6.500 2-7 3z" fill="#bfe6d4"/><path d="M753 60l7.500-3.500 6.500 2-7 3z" fill="#a4d8c0"/><path d="M753 62.500l7.500-3.500 6.500 2-7 3z" fill="#bfe6d4"/><rect x="756.500" y="60.500" width="10" height="5.500" fill="#4ab8d0" stroke="#2a8aa0"/><path d="M758.500 62.500h1.500M761.500 62.500h1.500M764 62.500h1.500M758.500 64.500h1.500M761.500 64.500h1.500M764 64.500h1.500" stroke="#e0f8ff" stroke-width="1.200"/></g>
<g><rect x="777.500" y="54.500" width="13" height="11" fill="#f8f8f8" stroke="#999"/><rect x="778" y="55" width="12" height="3.500" fill="#f0e070"/><path d="M778 60.500h12M778 63h12M782 58.500v7M786 58.500v7" stroke="#b8a8c8" stroke-width=".9"/><use href="#bino" transform="translate(781 53.500) scale(.8)"/></g>
<g><path d="M799.500 53.500l4 2 5-1.500v10l-5 2-4-2.500z" fill="#f4e4b0" stroke="#8a7a4a" stroke-width="1"/><path d="M803.500 55.500v10.500" stroke="#8a7a4a"/><path d="M799.500 53.500v10" stroke="#5a5a9a" stroke-width="1.500"/><path d="M801 58l2 2M805 59l2-2" stroke="#c08040" stroke-width="1"/></g>
<g fill="#fff" stroke="#333" stroke-width="1.100"><rect x="821.500" y="54.500" width="3.500" height="3.500"/><rect x="821.500" y="61.500" width="3.500" height="3.500"/><path d="M825 56.500h4M825 63.500h4"/><circle cx="832.500" cy="56" r="3.300" stroke="#4a4aa8"/><circle cx="832.500" cy="63" r="3.300" stroke="#4a4aa8"/></g><text x="831" y="58" font-size="5" font-weight="bold" fill="#4a4aa8">1</text><text x="831" y="65" font-size="5" font-weight="bold" fill="#4a4aa8">2</text>
<path d="M843.500 51v16M872.500 51v16M901.500 51v16" stroke="#d4d4d4"/>
<g><path d="M851 55l4-2 4 2v4l-4 2-4-2z" fill="#f4d860" stroke="#c8a030" stroke-width=".8"/><path d="M855 57v4M851 55l4 2 4-2" fill="none" stroke="#c8a030" stroke-width=".7"/><rect x="850.500" y="61.500" width="10" height="4.500" fill="#fff" stroke="#8a3ab8" stroke-width="1.200"/><path d="M853 64h1.500M855.500 64h1.500M858 64h1.500" stroke="#333" stroke-width="1.200"/><path d="M863 61v5.500l3-2.500z" fill="#b848c8"/><path d="M859 58l4-4" stroke="#c08040" stroke-width="1.500"/></g>
<g stroke-width="1.100" fill="none"><path d="M882 62l-1-8" stroke="#3a9a9a"/><path d="M882 62l8-3" stroke="#3a9a3a"/><path d="M882 62l6 4" stroke="#c0405a"/><path d="M888 52v6h5" stroke="#b04060"/><path d="M881 54l5-2" stroke="#e08040"/><path d="M886.500 54.500l2.500-3 1 3M891 57l2 1-2 1" stroke="#b04060" stroke-width=".8"/></g>
<g><rect x="909.500" y="52.500" width="13" height="13" fill="#f0f0f0" stroke="#333" stroke-width="1.300"/><rect x="911.500" y="54.500" width="7" height="7" fill="#fff" stroke="#333" stroke-width="1.300"/><path d="M912 65l3-3M916 65l5.500-5.500M920 65l2-2" stroke="#999" stroke-width=".7"/></g>
<g><rect x="931.500" y="53.500" width="15" height="10" fill="#eef0ee" stroke="#333" stroke-width="1.300"/><path d="M938 54v6h8.500" fill="none" stroke="#333" stroke-width="1"/><rect x="940.500" y="54" width="3.500" height="4.500" fill="#5a6ac8"/></g>
<g><rect x="954.500" y="53.500" width="15" height="10" fill="#f4eef2" stroke="#333" stroke-width="1.300"/><path d="M963.500 54l-4 4.500 4 4.500" fill="#e8d0e0" stroke="#7a3a6a" stroke-width="1.400"/></g>
<!-- row2 y=81 -->
<g stroke="#333" stroke-width="1.100"><path d="M729 77h3.500M735 77h3.500M741 77h2.500M729 84.500h3.500M735 84.500h3.500M741 84.500h2.500" /><path d="M732.500 74v2M732.500 78.500v3.500M732.500 84v3M740.500 74v2M740.500 78.500v3.500M740.500 84v3"/></g>
<g><use href="#bino" transform="translate(760 76.500)"/><use href="#dimh" transform="translate(760 85)"/></g>
<g><use href="#bino" transform="translate(783 76.500)"/><text x="776" y="89" font-size="6.500" font-weight="bold" fill="#333">10H7</text></g>
<g><path d="M799 75.500h14M799 83.500h14M806.500 74v14M812.500 74v10" stroke="#c0405a" stroke-width="1"/><rect x="799.500" y="84.500" width="5" height="3" fill="#fff" stroke="#4a4ab8" stroke-width="1"/><path d="M801 77l3-3 3 1 2 3-3 3-4-1z" fill="#f0c060" stroke="#a07020" stroke-width=".7"/><path d="M806 80l2.500 3" stroke="#333" stroke-width="1.500"/></g>
<g><path d="M822.500 78.500v6M823 81.500h11.500" stroke="#c0405a" stroke-width="1.100"/><path d="M823 81.500l2.500-1.500v3zM834.500 81.500l-2.500-1.500v3z" fill="#c0405a"/><path d="M827 74l3.500 5M830.500 74l-3.500 5" stroke="#c0405a" stroke-width="1"/><path d="M834.500 74v14" stroke="#333" stroke-width="1.100" stroke-dasharray="4 1.500"/></g>
<g><use href="#dimh" transform="translate(852 77.500)"/><text x="845" y="87.500" font-size="6.500" font-weight="bold" fill="#333">ABC</text></g>
<!-- row3 y=104 -->
<g><rect x="731.500" y="100.500" width="8" height="8" fill="#fff" stroke="#8a4a4a" stroke-width="1"/><path d="M734 100.500v8M736.500 100.500v8M731.500 103h8M731.500 105.500h8" stroke="#8a4a4a" stroke-width=".9"/><text x="729.500" y="99" font-size="4.500" font-weight="bold" fill="#333">Y</text><text x="740.500" y="110" font-size="4.500" font-weight="bold" fill="#333">x</text></g>
<path d="M753.500 108.500l6.500-11 6.500 11z" fill="#fff" stroke="#333" stroke-width="1.200"/>
<g><rect x="777.500" y="96.500" width="12" height="11" fill="#fdfdfd" stroke="#6a4a9a" stroke-width="1"/><rect x="777.500" y="96.500" width="12" height="2" fill="#7a5ab8"/><path d="M777.500 101h12M777.500 103.500h12M777.500 106h12M781.500 98.500v9M785.500 98.500v9" stroke="#c898c8" stroke-width=".8"/><path d="M782 109.500l3.500-4 3.500 4z" fill="#f8d8b0" stroke="#d05030" stroke-width="1"/></g>
<g><text x="799" y="110.500" font-size="9" font-weight="bold" fill="#3a3a98">A</text><path d="M806 102.500l6-6" stroke="#333" stroke-width="1.200"/><path d="M813.500 95.500l-4 1 3 3z" fill="#333"/></g>
<g><circle cx="829" cy="104" r="5.500" fill="#fff" stroke="#222" stroke-width="1.300"/><path d="M829 98.500a5.500 5.500 0 0 1 5.500 5.500h-5.500zM829 109.500a5.500 5.500 0 0 1-5.500-5.500h5.500z" fill="#222"/></g>
<g><circle cx="847" cy="100" r="1.600" fill="#d03a48"/><text x="843.500" y="111" font-size="8" font-weight="bold" fill="#c0405a">XYZ</text></g>
<rect x="867.500" y="96.500" width="15" height="14" fill="#fff" stroke="#666" stroke-width="1"/>
<g><rect x="890.500" y="95.500" width="8" height="7" fill="#fff" stroke="#5a4ab0" stroke-width="1"/><rect x="890.500" y="95.500" width="8" height="2" fill="#5a4ab0"/><path d="M893 97.500v5M895.500 97.500v5M890.500 100h8" stroke="#5a4ab0" stroke-width=".8"/><path d="M902 104l-5 2.500 5 2.500" fill="none" stroke="#a03050" stroke-width="1.400"/><path d="M904.500 101v2M904.500 106v3" stroke="#333" stroke-width="1.200"/></g>
<g><rect x="914.500" y="96.500" width="12" height="12" fill="#fafafa" stroke="#222" stroke-width="1.300"/><path d="M917 101h7M917 103.500h5M917 106h7" stroke="#222" stroke-width="1"/></g>
<g><use href="#dimh" transform="translate(944 107)"/><path d="M940 101l5-2 2 3-5 2z" fill="#e8c880" stroke="#a08040" stroke-width=".6"/><path d="M946 99l2-3.500" stroke="#6a6ab0" stroke-width="1.500"/></g>
<path d="M958.500 94v17M1010.500 94v17" stroke="#d4d4d4"/>
<g><circle cx="967.500" cy="97" r="2" fill="#e8c040" stroke="#b08020" stroke-width=".6"/><circle cx="971.500" cy="101.500" r="2.300" fill="#7a8ad8" stroke="#4a5ab0" stroke-width=".6"/><rect x="972.500" y="100.500" width="7" height="8" fill="#d4daf4" stroke="#7c7cc0" stroke-width="1"/><path d="M975 104h1M977 104h1M975 106.500h1M977 106.500h1" stroke="#4a4a98" stroke-width="1"/></g>
<g fill="none" stroke="#3a3a3a"><circle cx="995.500" cy="104" r="5.800" stroke-width="2.400" stroke-dasharray="2.300 2.255" transform="rotate(-14 995.500 104)"/><circle cx="995.500" cy="104" r="5.800" stroke="#fff" stroke-width=".9" stroke-dasharray="1.300 3.255" transform="rotate(-9 995.500 104)"/><circle cx="995.500" cy="104" r="4.300" stroke-width="1.100" fill="#fff"/><circle cx="995.500" cy="104" r="2" stroke-width="1"/></g>
<g fill="none"><path d="M1018 98v11.500M1021 98v11.500M1024 98v11.500M1027 98v11.500M1030 98v11.500" stroke="#6e1420" stroke-width="1.400"/><path d="M1018 109.500l3-11.500M1021 109.500l3-11.500M1024 109.500l3-11.500M1027 109.500l3-11.500M1030 109.500l2-8" stroke="#b03040" stroke-width="1.100"/><path d="M1017 101h15M1017 106h15" stroke="#d8a0a8" stroke-width=".7"/></g>
</svg>
<!-- ===== ribbon icons D : dim quick format ===== -->
<svg width="1272" height="140" style="left:0;top:0" font-family="Liberation Sans,sans-serif" font-weight="bold">
<g><path d="M1051.500 62.500h5v-8h4v10h-9z" fill="#fff" stroke="#333" stroke-width="1.200"/><path d="M1051 52.500h5M1053.500 52v1M1051 66.500h7M1062.500 55v9M1061 55h3M1061 64h3M1051 51.500v2M1056 51.500v2M1051 65.500v2M1058 65.500v2" stroke="#b04a5a" stroke-width="1"/><path d="M1046.500 59l2 3M1048.500 59l-2 3" stroke="#b04a5a" stroke-width=".8"/></g>
<path d="M1050 76.500l7 8M1057 76.500l-7 8" stroke="#222" stroke-width="1.300"/>
<g font-size="7.500" fill="#222" font-weight="normal"><text x="1070.500" y="80">1.00</text><text x="1093.500" y="80">1.00</text><text x="1116.500" y="80">1.00</text><text x="1139.500" y="80">1.00</text></g>
<g font-size="5.500" fill="#a84a5a"><text x="1071" y="87">±.05</text><text x="1094" y="85">+.05</text><text x="1094" y="89.500">−.02</text><text x="1140" y="89.500">−.02</text></g>
<g font-size="5.500" fill="#b8a8ac"><text x="1117" y="85">+.05</text><text x="1117" y="89.500">−.00</text><text x="1140" y="85">+.00</text></g>
<rect x="1161.500" y="73.500" width="14" height="14" fill="#fff" stroke="#8a3a4a" stroke-width="1.100"/><path d="M1165 77l7 7.500M1172 77l-7 7.500" stroke="#222" stroke-width="1.300"/>
<path d="M1186.500 73.500q-3 7.500 0 15M1196.500 73.500q3 7.500 0 15" fill="none" stroke="#8a3a4a" stroke-width="1"/><path d="M1187.500 77l7 7.500M1194.500 77l-7 7.500" stroke="#222" stroke-width="1.300"/>
<text x="1206" y="84.500" font-size="7" fill="#3a3aa8">10H7</text>
<g font-size="7" fill="#3a3aa8"><text x="1046" y="102.500">10H7</text><text x="1069" y="102.500">10H7</text><text x="1096" y="102.500">10</text></g>
<g font-size="5.500" fill="#3a3aa8"><text x="1046" y="110">[|8·⁰¹]</text><text x="1069" y="110">[8⁰¹⁵]</text><text x="1092" y="110">[8⁰¹⁵]</text></g>
<path d="M1114.500 94v17M1166.500 94v17" stroke="#d4d4d4"/>
<g><path d="M1123 110l13-13" stroke="#c0405a" stroke-width="1"/><path d="M1122.500 110.500l1-3.500 2.500 2.500z" fill="#c0405a"/><text x="1125" y="103.500" font-size="5" fill="#c0405a" transform="rotate(-45 1128 102)">n.o</text></g>
<g><path d="M1146 106l5-4.500h8.500" fill="none" stroke="#c0405a" stroke-width="1"/><path d="M1144.500 107.500l1.500-3.500 2 2.500z" fill="#c0405a"/><text x="1149.500" y="100.500" font-size="5" fill="#c0405a">R|o|</text></g>
<g fill="none" stroke-width="1.100"><circle cx="1180.500" cy="104" r="4.800" stroke="#333"/><path d="M1176 108.500l11-11" stroke="#c0405a"/><path d="M1180.500 104l2.500-1-1.500 2.500z" fill="#c0405a" stroke="#c0405a" stroke-width=".5"/><circle cx="1203" cy="104" r="4.800" stroke="#333"/><path d="M1196.500 110.500l13-13" stroke="#c0405a"/><path d="M1199.500 107.500l2.500-1-1.500 2.500zM1206.500 100.500l-2.500 1 1.500-2.500z" fill="#c0405a" stroke="#c0405a" stroke-width=".5"/></g>
<path d="M1230 100v4q0 2.500-3 2.500h-3.500v2.500l-4-4 4-4v2.500h3q1 0 1-1v-2.500z" fill="#3a9a9a"/>
</svg>
<!-- ===== selection bar ===== -->
<div class="abs" id="selbar"></div>
<div class="abs" style="left:22px;top:147px;font-size:11px;line-height:16px;white-space:nowrap;color:#1a1a1a">菜单(<u>M</u>)</div>
<div class="abs dd" style="left:66px;top:154px;border-left-width:3px;border-right-width:3px"></div>
<div class="abs" style="left:78px;top:145px;width:1px;height:22px;background:#d9d9d9"></div>
<div class="abs combo" style="left:91px;width:133px;font-size:11px">无选择过滤器</div>
<div class="abs combo" style="left:232px;width:140px;font-size:11px">整个装配</div>
<div class="abs dd" style="left:210px;top:155px;border-left-width:4px;border-right-width:4px"></div>
<div class="abs dd" style="left:358px;top:155px;border-left-width:4px;border-right-width:4px"></div>
<div class="abs hl" style="left:549px;top:145px;width:22px;height:21px"></div>
<div class="abs hl" style="left:573px;top:145px;width:23px;height:21px"></div>
<div class="abs hl" style="left:599px;top:145px;width:23px;height:21px"></div>
<div class="abs hl" style="left:649px;top:145px;width:23px;height:21px"></div>
<div class="abs hl" style="left:673px;top:145px;width:23px;height:21px"></div>
<div class="abs hl" style="left:723px;top:145px;width:23px;height:21px"></div>
<div class="abs hl" style="left:773px;top:145px;width:23px;height:21px"></div>
<div class="abs hl" style="left:799px;top:145px;width:23px;height:21px"></div>
<div class="abs" style="left:853px;top:145px;width:1px;height:22px;background:#d4d4d4"></div>
<div class="abs" style="left:991px;top:145px;width:1px;height:22px;background:#d4d4d4"></div>
<div class="abs dd" style="left:425px;top:154px"></div>
<div class="abs dd" style="left:537px;top:154px"></div>
<div class="abs dd" style="left:939px;top:154px"></div>
<div class="abs dd" style="left:975px;top:154px"></div>
<svg width="1272" height="172" style="left:0;top:0">
<!-- menu icon -->
<g stroke="#6a7ac8" stroke-width="1.200"><path d="M3 149.500h13M6 153.500h10M6 157.500h6M6 161.500h5"/></g>
<path d="M11.500 155l0 8 2-2 1.500 3.500 1.500-.7-1.500-3.300h2.800z" fill="#e8e8e8" stroke="#555" stroke-width=".8"/>
<!-- grey undo+filter -->
<g fill="#d0d0d0"><path d="M382 153l3.500-3v2q4 0 4 3.500-1.500-1.500-4-1.500v2z"/><path d="M389 158h8l-3 3.500v3.500h-2v-3.500z"/></g>
<!-- boxed -->
<rect x="403.500" y="148.500" width="15" height="15" fill="#fff" stroke="#b0404a" stroke-width="1.100"/>
<g fill="none" stroke="#333" stroke-width="1"><circle cx="408.500" cy="153.500" r="2"/><path d="M408.500 150v7M405 153.500h7"/></g>
<path d="M411 157.500h6l-2.200 2.500v3h-1.600v-3z" fill="#e8a040"/>
<!-- grey icons -->
<g fill="none" stroke="#c4c4c4" stroke-width="1.100"><path d="M444 152q0-3 3-3t3 3"/><path d="M442.500 150.500l1.500 2 2-1.500"/><circle cx="450.500" cy="158" r="3"/><path d="M450.500 153v10M445.500 158h10"/></g>
<g fill="none" stroke="#c4c4c4" stroke-width="1.100"><path d="M466 152q1-3 3-1t3-1 2 2-1 2"/><path d="M471 155h5.500v8h-5.500zM473 157v5h2"/></g><circle cx="467.500" cy="152.500" r="1.800" fill="#c8c8c8"/>
<g fill="none" stroke="#c4c4c4" stroke-width="1.100"><circle cx="495" cy="153.500" r="4.500" stroke-dasharray="1.500 1.500"/><circle cx="501.500" cy="159.500" r="3" stroke="#aaa"/><path d="M501.500 155v9M497 159.500h9" stroke="#aaa"/></g>
<!-- dashed rect -->
<rect x="515.500" y="150.500" width="13" height="11" fill="none" stroke="#222" stroke-width="1.200" stroke-dasharray="2.500 1.500"/><circle cx="515.500" cy="150.500" r="1.200" fill="#d03a48"/><circle cx="528.500" cy="161.500" r="1.200" fill="#d03a48"/>
<!-- snap point buttons -->
<g><path d="M552.500 149.500v4l3.500-2z" fill="#2a9a3a"/><path d="M552.500 158v4l3.500-2z" fill="#d03a48"/><circle cx="563" cy="156" r="3.800" fill="#f0e040" stroke="#222" stroke-width="1"/><g fill="#111"><circle cx="563" cy="151.500" r="1.500"/><circle cx="563" cy="160.500" r="1.500"/><circle cx="558.500" cy="156" r="1.500"/><circle cx="567.500" cy="156" r="1.500"/></g><path d="M560 153l6 6M566 153l-6 6" stroke="#222" stroke-width=".7"/></g>
<g><path d="M579 161.500l10-10" stroke="#222" stroke-width="1.300"/><circle cx="589" cy="151.500" r="1.500" fill="#d03a48"/></g>
<g><path d="M604.500 162l11-11" stroke="#222" stroke-width="1.300"/><circle cx="610" cy="156.500" r="1.500" fill="#d03a48"/></g>
<g><path d="M627.500 150q5 0 6 6t6 6" fill="none" stroke="#222" stroke-width="1.200"/><circle cx="633.500" cy="156" r="1.300" fill="#a05050"/></g>
<g><path d="M654.500 157.500l4-8 4 11.500 4-6" fill="none" stroke="#3a3a98" stroke-width="1.200"/><g fill="#d03a68"><circle cx="654.500" cy="157.500" r="1.500"/><circle cx="658.500" cy="149.500" r="1.500"/><circle cx="662.500" cy="161" r="1.500"/><circle cx="666.500" cy="155" r="1.500"/></g></g>
<g><path d="M678 159q2-6 5-3t4 0 4-3" fill="none" stroke="#d03a58" stroke-width="1.800"/><g fill="#b02a48"><circle cx="678.500" cy="159" r="1.300"/><circle cx="683.500" cy="155.500" r="1.300"/><circle cx="688" cy="157" r="1.300"/><circle cx="691.500" cy="153" r="1.300"/></g></g>
<g fill="none" stroke="#333" stroke-width="1.100"><path d="M710.500 149v14"/><path d="M704 159q6.500-8 13 0"/></g>
<g><circle cx="735" cy="156" r="7" fill="none" stroke="#222" stroke-width="1.300"/><circle cx="735" cy="156" r="1.500" fill="#d03a48"/></g>
<g><circle cx="760.500" cy="156" r="6" fill="none" stroke="#a05050" stroke-width="1.200"/><g fill="#d03a48"><circle cx="760.500" cy="150" r="1.300"/><circle cx="760.500" cy="162" r="1.300"/><circle cx="754.500" cy="156" r="1.300"/><circle cx="766.500" cy="156" r="1.300"/></g></g>
<g><path d="M785 149.500v13M778.500 156h13" stroke="#222" stroke-width="1.300"/><circle cx="785" cy="156" r="1.300" fill="#d03a48"/></g>
<g><path d="M804.500 162l11-11" stroke="#222" stroke-width="1.300"/><circle cx="807" cy="159.500" r="1.500" fill="#d03a48"/></g>
<g><path d="M826.500 152q3-4 7-2.500l7 3.500q-4 3-3 8l-5 1.500q-7-2-6-10.500z" fill="#dce4f0" stroke="#9aa8c0" stroke-width=".9"/><path d="M833.500 149.500l7 3.500q-4 3-3 8" fill="none" stroke="#f4f6fa" stroke-width="1.500"/><circle cx="834" cy="153.500" r="1.500" fill="#d03a48"/></g>
<!-- view icons -->
<g><rect x="867.500" y="149.500" width="13" height="12" fill="#f4f6fc" stroke="#4a4aa8" stroke-width="1" stroke-dasharray="1.500 1"/><rect x="867.500" y="148.500" width="13" height="2.500" fill="#5a6ac0"/><circle cx="874" cy="156" r="3.500" fill="#e8f0f8" stroke="#555" stroke-width="1"/><path d="M876.500 158.500l3 3" stroke="#555" stroke-width="1.500"/><circle cx="867.500" cy="162" r="1.200" fill="#d03a48"/><circle cx="880.500" cy="150" r="1.200" fill="#d03a48"/></g>
<g><rect x="890.500" y="149.500" width="13" height="10" fill="#e4e6f4" stroke="#9a9ac8" stroke-width="1"/><path d="M898 154l1-2 1.500.5v-1l1.500.5v-.5l1.500.8.500 5.500-1.500 3h-3.500z" fill="#f0d8a0" stroke="#c0a060" stroke-width=".7"/></g>
<g><rect x="917.500" y="149.500" width="13" height="12" fill="#eef0fa" stroke="#4a5ab0" stroke-width="1.200"/><rect x="917.500" y="149.500" width="13" height="2.500" fill="#5a6ac0"/><g fill="#e04030"><path d="M920 154h2.500l-2.500 2.500zM928 154h-2.500l2.500 2.500zM920 160.500h2.500l-2.500-2.500zM928 160.500h-2.500l2.500-2.500z"/></g></g>
<g><path d="M952.500 149.500v4l3.500-2z" fill="#2a9a3a"/><path d="M952.500 158v4l3.500-2z" fill="#d03a48"/><path d="M956 157l5-5 5 3-5 5z" fill="#c8d4f0" stroke="#4a5a98" stroke-width="1"/><path d="M959 156l3-3 3 2-3 3z" fill="#f4f6ff"/></g>
</svg>
<!-- ===== main area ===== -->
<div class="abs" id="resbar"></div>
<div class="abs" style="left:0;top:254px;width:24px;height:1px;background:#bdbdbd"></div>
<div class="abs" style="left:23px;top:172px;width:1px;height:83px;background:#c4c4c4"></div>
<div class="abs" style="left:23px;top:299px;width:1px;height:655px;background:#c4c4c4"></div>
<div class="abs" style="left:0;top:255px;width:24px;height:44px;background:#fff"></div>
<div class="abs" style="left:0;top:299px;width:24px;height:1px;background:#c8c8c8"></div>
<div class="abs" id="nav"></div>
<div class="abs" style="left:35px;top:178px;font-size:12px;line-height:16px;white-space:nowrap;color:#1a1a1a">部件导航器</div>
<div class="abs" style="left:328px;top:182px;width:11px;height:10px;border:1px solid #111;border-top-width:2px"></div>
<div class="abs" style="left:30px;top:200px;width:316px;height:670px;border:1px solid #dadada;background:#fff"></div>
<div class="abs" style="left:31px;top:201px;width:314px;height:22px;background:#f0f0f0;border-bottom:1px solid #d0d0d0"></div>
<div class="abs tt" style="left:38px;top:202px">名称</div>
<div class="abs" style="left:80px;top:210px;width:0;height:0;border-left:4.500px solid transparent;border-right:4.500px solid transparent;border-bottom:5px solid #111"></div>
<div class="abs tt" style="left:237px;top:202px">最新</div>
<div class="abs tt" style="left:294px;top:202px">附注</div>
<div class="abs trow tr-a" style="top:223px;height:20px;border-bottom:1px solid #ececec"></div>
<div class="abs trow tr-b" style="top:243px;height:20px;border-bottom:1px solid #ececec"></div>
<div class="abs trow tr-a" style="top:263px;height:20px;border-bottom:1px solid #ececec"></div>
<div class="abs trow tr-b" style="top:283px;height:20px;border-bottom:1px solid #ececec"></div>
<div class="abs trow tr-a" style="top:303px;height:20px;border-bottom:1px solid #ececec"></div>
<div class="abs trow tr-b" style="top:323px;height:20px;border-bottom:1px solid #ececec"></div>
<div class="abs trow tr-a" style="top:343px;height:20px;border-bottom:1px solid #ececec"></div>
<div class="abs trow tr-b" style="top:363px;height:20px;border-bottom:1px solid #ececec"></div>
<div class="abs trow tr-a" style="top:383px;height:20px;border-bottom:1px solid #ececec"></div>
<div class="abs trow tr-b" style="top:403px;height:20px;border-bottom:1px solid #ececec"></div>
<div class="abs trow tr-a" style="top:423px;height:20px;border-bottom:1px solid #ececec"></div>
<div class="abs trow tr-b" style="top:443px;height:20px;border-bottom:1px solid #ececec"></div>
<div class="abs trow tr-a" style="top:463px;height:20px;border-bottom:1px solid #ececec"></div>
<div class="abs trow tr-b" style="top:483px;height:20px;border-bottom:1px solid #ececec"></div>
<div class="abs trow tr-a" style="top:503px;height:20px;border-bottom:1px solid #ececec"></div>
<div class="abs trow tr-b" style="top:523px;height:20px;border-bottom:1px solid #ececec"></div>
<div class="abs trow tr-a" style="top:543px;height:20px;border-bottom:1px solid #ececec"></div>
<div class="abs trow tr-b" style="top:563px;height:20px;border-bottom:1px solid #ececec"></div>
<div class="abs trow tr-a" style="top:583px;height:20px;border-bottom:1px solid #ececec"></div>
<div class="abs trow tr-b" style="top:603px;height:20px;border-bottom:1px solid #ececec"></div>
<div class="abs trow tr-a" style="top:623px;height:20px;border-bottom:1px solid #ececec"></div>
<div class="abs trow tr-b" style="top:643px;height:20px;border-bottom:1px solid #ececec"></div>
<div class="abs trow tr-a" style="top:663px;height:20px;border-bottom:1px solid #ececec"></div>
<div class="abs trow tr-b" style="top:683px;height:20px;border-bottom:1px solid #ececec"></div>
<div class="abs trow tr-a" style="top:703px;height:20px;border-bottom:1px solid #ececec"></div>
<div class="abs trow tr-b" style="top:723px;height:20px;border-bottom:1px solid #ececec"></div>
<div class="abs trow tr-a" style="top:743px;height:20px;border-bottom:1px solid #ececec"></div>
<div class="abs trow tr-b" style="top:763px;height:20px;border-bottom:1px solid #ececec"></div>
<div class="abs trow tr-a" style="top:783px;height:20px;border-bottom:1px solid #ececec"></div>
<div class="abs trow tr-b" style="top:803px;height:20px;border-bottom:1px solid #ececec"></div>
<div class="abs trow tr-a" style="top:823px;height:20px;border-bottom:1px solid #ececec"></div>
<div class="abs trow tr-b" style="top:843px;height:10px;border-bottom:1px solid #ececec"></div>
<div class="abs" style="left:231px;top:201px;width:1px;height:652px;background:#e4e4e4"></div>
<div class="abs" style="left:288px;top:201px;width:1px;height:652px;background:#e4e4e4"></div>
<div class="abs tt" style="left:86px;top:222px">图纸</div>
<div class="abs tt" style="left:105px;top:242px">工作表 "SHT1" (工作...</div>
<div class="abs tt" style="left:124px;top:262px">导入的 "Bottom...</div>
<div class="abs tt" style="left:124px;top:282px">导入的 "Front@3...</div>
<div class="abs tt" style="left:124px;top:302px">导入的 "Isometri...</div>
<div class="abs tt" style="left:124px;top:322px">导入的 "Left@43"</div>
<div class="abs tt" style="left:124px;top:342px">导入的 "Right@4...</div>
<div class="abs tt" style="left:124px;top:362px">导入的 "Top@40"</div>
<div class="abs tt" style="left:105px;top:382px">过时</div>
<div class="abs tt" style="left:70px;top:402px">用户表达式</div>
<div class="abs tt" style="left:70px;top:422px">模型历史记录</div>
<div class="abs tt" style="left:105px;top:442px">基准坐标系 (0)</div>
<div class="abs tt" style="left:105px;top:462px">拉伸 (1)</div>
<div class="abs tt" style="left:105px;top:482px">壳 (2)</div>
<div class="abs tt" style="left:105px;top:502px">拉伸 (3)</div>
<div class="abs tt" style="left:105px;top:522px">简单孔 (4)</div>
<div class="abs tt" style="left:105px;top:542px">边倒圆 (5)</div>
<div class="abs tt" style="left:105px;top:562px">拉伸 (6)</div>
<div class="abs tt" style="left:105px;top:582px">拉伸 (7)</div>
<div class="abs tt" style="left:105px;top:602px;font-weight:bold">边倒圆 (8)</div>
<!-- ===== tree icons ===== -->
<svg width="360" height="700" style="left:0;top:172px" viewBox="0 172 360 700">
<defs>
 <path id="chk" d="M0 6.500l2.300-2 2.200 3.200q3-5.700 7-7.700l.5 1.300q-4 3.500-7 10.200h-1.300q-1.500-3-3.700-5z" fill="#2fb83a" stroke="#1f9a2a" stroke-width=".5"/>
 <linearGradient id="gfold" x1="0" y1="0" x2="0" y2="1"><stop offset="0" stop-color="#fff3a8"/><stop offset="1" stop-color="#f0b020"/></linearGradient>
 <g id="fold"><path d="M.5 13.500v-9.500l1-1.500h4l1.500 1.500h5.500v2.500" fill="#fbe68a" stroke="#b88a10" stroke-width="1"/><path d="M.5 13.500l3-7.500h12l-3 7.500z" fill="url(#gfold)" stroke="#b88a10" stroke-width="1"/></g>
 <g id="ebox"><rect x=".5" y=".5" width="8" height="8" fill="#fff" stroke="#c8c8c8"/><path d="M2.500 4.500h4" stroke="#111" stroke-width="1.200"/></g>
 <g id="cbox"><rect x=".5" y=".5" width="11" height="11" fill="#fff" stroke="#111" stroke-width="1.200"/><path d="M2 6l1.500-1.300 1.700 2.300q1.800-3.600 5-5.500l.4 1q-3 2.800-4.800 7.500h-1q-1-2.300-2.800-4z" fill="#2fb83a" stroke="#1f9a2a" stroke-width=".4"/></g>
 <linearGradient id="gext" x1="0" y1="0" x2="1" y2="0"><stop offset="0" stop-color="#f8c060"/><stop offset="1" stop-color="#e87818"/></linearGradient>
 <g id="ext"><path d="M1 3.500l5-2 8 1v10l-8 1.500-5-1.500z" fill="url(#gext)" stroke="#c86010" stroke-width=".8"/><path d="M4 3v9.500M7 2.500v10.500M10.500 3v9.500" stroke="#fff0c8" stroke-width="1.200"/><path d="M1 12.500q6.500 3 13 0" fill="none" stroke="#4a5ac8" stroke-width="1.100"/></g>
 <g id="blend"><path d="M1 5l4-3.500h9v8l-3.500 4h-9.500z" fill="#4a72d8" stroke="#2a3a9a" stroke-width=".8"/><path d="M1 5h9.500l3.500-3.500" fill="none" stroke="#2a3a9a" stroke-width=".8"/><path d="M2 6.500h8.500v6h-8.500z" fill="#f8f0e0"/><path d="M2 6.500h8.500v2.500h-8.500z" fill="#e85030"/><path d="M10.500 5v8.500" stroke="#2a3a9a" stroke-width=".8"/></g>
</defs>
<g stroke="#9a9a9a" stroke-width="1" stroke-dasharray="1 2" fill="none">
<path d="M41.500 238v195"/>
<path d="M60.500 258v135"/>
<path d="M79.500 263v110"/>
<path d="M60.500 443v170"/>
<path d="M46 233.500h6"/>
<path d="M65 253.500h6"/>
<path d="M80 273.500h10"/>
<path d="M80 293.500h10"/>
<path d="M80 313.500h10"/>
<path d="M80 333.500h10"/>
<path d="M80 353.500h10"/>
<path d="M80 373.500h10"/>
<path d="M61 393.500h10"/>
<path d="M42 413.500h8"/>
<path d="M46 433.500h5"/>
<path d="M61 453.500h10"/>
<path d="M61 473.500h10"/>
<path d="M61 493.500h10"/>
<path d="M61 513.500h10"/>
<path d="M61 533.500h10"/>
<path d="M61 553.500h10"/>
<path d="M61 573.500h10"/>
<path d="M61 593.500h10"/>
<path d="M61 613.500h10"/>
</g>
<use href="#ebox" x="37" y="229"/>
<use href="#ebox" x="56" y="249"/>
<use href="#ebox" x="37" y="429"/>
<use href="#chk" x="53" y="227.500"/>
<use href="#chk" x="72" y="247.500"/>
<use href="#chk" x="91" y="267.5"/>
<use href="#chk" x="91" y="287.5"/>
<use href="#chk" x="91" y="307.5"/>
<use href="#chk" x="91" y="327.5"/>
<use href="#chk" x="91" y="347.5"/>
<use href="#chk" x="91" y="367.5"/>
<use href="#chk" x="237.500" y="247.5"/>
<use href="#chk" x="237.500" y="267.5"/>
<use href="#chk" x="237.500" y="287.5"/>
<use href="#chk" x="237.500" y="307.5"/>
<use href="#chk" x="237.500" y="327.5"/>
<use href="#chk" x="237.500" y="347.5"/>
<use href="#chk" x="237.500" y="367.5"/>
<use href="#chk" x="237.500" y="447.5"/>
<use href="#chk" x="237.500" y="467.5"/>
<use href="#chk" x="237.500" y="487.5"/>
<use href="#chk" x="237.500" y="507.5"/>
<use href="#chk" x="237.500" y="527.5"/>
<use href="#chk" x="237.500" y="547.5"/>
<use href="#chk" x="237.500" y="567.5"/>
<use href="#chk" x="237.500" y="587.5"/>
<use href="#chk" x="237.500" y="607.5"/>
<g><rect x="70.500" y="226.500" width="12" height="10" fill="#c8cce8" stroke="#5a5a98"/><rect x="69" y="228" width="12.500" height="10.500" fill="#dfe2f4" stroke="#5a5a98"/><rect x="67.500" y="229.500" width="13" height="11" fill="url(#gsheet)" stroke="#5a5a98"/><rect x="74.500" y="236.500" width="6" height="4" fill="#f4f5fb" stroke="#6a6aa8"/><path d="M74.500 238.500h6" stroke="#6a6aa8"/></g>
<g><rect x="87.500" y="247.500" width="13" height="11" fill="url(#gsheet)" stroke="#7a7ab8"/><rect x="94.500" y="254.500" width="6" height="4" fill="#f4f5fb" stroke="#7a7ab8"/><path d="M94.500 256.500h6" stroke="#7a7ab8"/></g>
<g><path d="M106.500 265.5h10l3 3v10h-13z" fill="#bdbdbd" stroke="#111" stroke-width="1.400"/><rect x="115" y="267" width="2.500" height="2.500" fill="#fff" stroke="#111" stroke-width=".8"/></g>
<g><path d="M107.500 285v13.500h12" fill="none" stroke="#111" stroke-width="3"/><path d="M107.500 286v11.500M109 298.5h9" stroke="#e8e0c8" stroke-width="1" stroke-dasharray="4 1"/></g>
<g><path d="M109.500 309l6-3.500 1.500.5v7l-8.500 4.500-1.500-2.500z" fill="#a8a8a8" stroke="#222" stroke-width="1.100"/><path d="M107 315l10-2.500 3.500 2-9 4.500-3.500-.5z" fill="#d4d4d4" stroke="#222" stroke-width="1.100"/><circle cx="111" cy="317.5" r="1.300" fill="#eee" stroke="#222" stroke-width=".7"/></g>
<g><path d="M106.500 325.5h7.500l5.500 5v8h-13z" fill="#bdbdbd" stroke="#111" stroke-width="1.400"/></g>
<g><path d="M111.500 345.5h8v13h-13v-7.500z" fill="#bdbdbd" stroke="#111" stroke-width="1.400"/><path d="M106.500 355.5h13" stroke="#111" stroke-width="1.200"/><path d="M108 357h4M113 357h5.500" stroke="#eee" stroke-width="1"/></g>
<g><path d="M106.500 364.5h13v11l-3 3h-10z" fill="#bdbdbd" stroke="#111" stroke-width="1.400"/><path d="M108.500 365v13" stroke="#111" stroke-width="1"/><path d="M107.500 366v11" stroke="#e8dcc0" stroke-width="1" stroke-dasharray="5 1"/><rect x="115.500" y="374.5" width="2.500" height="2.500" fill="#fff" stroke="#111" stroke-width=".8"/></g>
<use href="#fold" x="86" y="386"/>
<use href="#fold" x="51" y="406"/><path d="M59 406.500h6M61 408.500h5" stroke="#2a2a8a" stroke-width="1"/>
<use href="#fold" x="51" y="426"/>
<use href="#cbox" x="72.500" y="446.5"/>
<use href="#cbox" x="72.500" y="466.5"/>
<use href="#cbox" x="72.500" y="486.5"/>
<use href="#cbox" x="72.500" y="506.5"/>
<use href="#cbox" x="72.500" y="526.5"/>
<use href="#cbox" x="72.500" y="546.5"/>
<use href="#cbox" x="72.500" y="566.5"/>
<use href="#cbox" x="72.500" y="586.5"/>
<use href="#cbox" x="72.500" y="606.5"/>
<g fill="none" stroke-width="1"><path d="M88.500 445v11.500l4.500 2.500" stroke="#222"/><path d="M88.500 447l6 4.500-6 4M94.500 451.5v5l-1.500 2" stroke="#222"/><path d="M94.500 451.5l6-3.500" stroke="#3a6a3a" stroke-dasharray="2 1"/><path d="M93 456l7 4.500" stroke="#a03040"/><path d="M87.500 444l1 2 1-2" stroke="#3a3ab0"/></g>
<use href="#ext" x="87" y="464.5"/>
<use href="#ext" x="87" y="504.5"/>
<use href="#ext" x="87" y="564.5"/>
<use href="#ext" x="87" y="584.5"/>
<g><path d="M87.500 490l6-5 7 2v9l-6 4.500-7-3z" fill="#4a6ad0" stroke="#2a3a9a" stroke-width=".8"/><path d="M89 490.5l5-4v7.500l-5 3z" fill="#f0a060" stroke="#c05020" stroke-width=".6"/><path d="M94 487l5 1.500v7l-5-1.500z" fill="#e05838"/><path d="M91 491v4.500M92.500 490v4.500" stroke="#fff" stroke-width=".8"/></g>
<path d="M90.500 525v9.500l3.500 4 3.500-4v-9.500" fill="#fff" stroke="#222" stroke-width="1.300"/>
<use href="#blend" x="87" y="545"/>
<use href="#blend" x="87" y="605"/>
</svg>
<div class="abs" style="left:74px;top:383px;font-size:17px;font-weight:bold;line-height:18px;color:#e8e020;-webkit-text-stroke:.6px #8a8a10">?</div>
<!-- ===== nav bottom ===== -->
<div class="abs" style="left:31px;top:853px;width:314px;height:16px;background:#f0f0f0"></div>
<div class="abs" style="left:50px;top:854px;width:240px;height:14px;border:1px solid #9a9a9a;border-radius:2px;background:linear-gradient(#f4f4f4,#dcdcdc 45%,#cfcfcf 50%,#d8d8d8)"></div>
<div class="abs" style="left:166px;top:858px;width:1px;height:6px;background:#555;box-shadow:2px 0 0 #555,4px 0 0 #555"></div>
<div class="abs" style="left:38px;top:857px;width:0;height:0;border-top:3.500px solid transparent;border-bottom:3.500px solid transparent;border-right:4px solid #333"></div>
<div class="abs" style="left:333px;top:857px;width:0;height:0;border-top:3.500px solid transparent;border-bottom:3.500px solid transparent;border-left:4px solid #333"></div>
<div class="abs" style="left:30px;top:871px;width:316px;height:4px;background:#d0d0d0;border:1px solid #a8a8a8"></div>
<div class="abs" style="left:37px;top:880px;font-size:14px;line-height:18px;color:#27687f;white-space:nowrap">相关性</div>
<div class="abs" style="left:37px;top:904px;font-size:14px;line-height:18px;color:#27687f;white-space:nowrap">细节</div>
<div class="abs" style="left:37px;top:928px;font-size:14px;line-height:18px;color:#27687f;white-space:nowrap">预览</div>
<div class="abs" style="left:30px;top:898px;width:316px;height:2px;background:#d4d4d4"></div>
<div class="abs" style="left:30px;top:922px;width:316px;height:2px;background:#d4d4d4"></div>
<div class="abs" style="left:30px;top:946px;width:316px;height:2px;background:#d4d4d4"></div>
<svg width="20" height="70" style="left:326px;top:880px"><g fill="none" stroke="#27687f" stroke-width="2.200"><path d="M3 3l5 8.500 5-8.500"/><path d="M3 27l5 8.500 5-8.500"/><path d="M3 51l5 8.500 5-8.500"/></g></svg>
<!-- ===== resource bar icons ===== -->
<svg width="24" height="400" style="left:0;top:172px" viewBox="0 172 24 400">
<defs>
 <g id="ycube"><path d="M0 2l3.500-2 3.500 2v4l-3.500 2-3.500-2z" fill="#f8e040" stroke="#c0a010" stroke-width=".7"/><path d="M0 2l3.500 2 3.500-2M3.500 4v4" fill="none" stroke="#c0a010" stroke-width=".7"/><path d="M.5 2.300l3 1.700v3.500l-3-1.700z" fill="#e8c820"/></g>
</defs>
<!-- gear -->
<g><circle cx="7" cy="184.500" r="4.800" fill="none" stroke="#222" stroke-width="1.400"/><circle cx="7" cy="184.500" r=".9" fill="#222"/><g stroke="#222" stroke-width="1.900" transform="translate(0 -.5)"><path d="M7 178v2M7 190v2M0 185h2M12 185h2M2 180l1.500 1.500M10.500 188.500l1.500 1.500M12 180l-1.500 1.500M3.500 188.500l-1.500 1.500"/></g></g>
<!-- assembly nav -->
<use href="#ycube" x="-1" y="226"/><use href="#ycube" x="3" y="223.500"/><use href="#ycube" x="4.500" y="228.500"/>
<path d="M3 235.500v10.500M3 241.500h6M13 235.500h8" stroke="#1a1a6a" stroke-width="1.200" fill="none"/>
<use href="#ycube" x="11.500" y="238"/>
<!-- constraint nav -->
<path d="M0 268.500v6q4.500 2.500 9 0v-6" fill="#e8a0d0" stroke="#904080" stroke-width=".8"/><ellipse cx="4.500" cy="268.500" rx="4.500" ry="2" fill="#f8d0ec" stroke="#904080" stroke-width=".8"/>
<path d="M3 277v12M3 282.500h6M12 274.500h8" stroke="#1a1a4a" stroke-width="1.200" fill="none"/>
<circle cx="14.500" cy="283" r="4.300" fill="#f4e8f4" stroke="#803080" stroke-width="1.300"/><circle cx="14.500" cy="283" r="1.500" fill="#803080"/>
<!-- books -->
<path d="M0 311l3-4h17.500v19l-3 4h-17.500z" fill="#e8e8f0"/>
<path d="M0 311h5v19h-5z" fill="#f08020"/><path d="M0 311l3-4h4.500l-2.500 4z" fill="#f8c080"/>
<path d="M5 311h5v19h-5z" fill="#30b040"/><path d="M5 311l2.500-4h5l-2.500 4z" fill="#a0e0a0"/>
<path d="M10 311h7v19h-7z" fill="#3080d8"/><path d="M10 311l2.500-4h8l-3.500 4z" fill="#c0dcf8"/><path d="M17 311l3.500-4v19l-3.500 4z" fill="#1a5ab0"/>
<path d="M0 326.500h17" stroke="#fff" stroke-opacity=".5" stroke-width="1"/>
<!-- info/wifi -->
<g fill="none" stroke="#2a60c8" stroke-width="2"><path d="M5 366a8 8 0 0 1 8 8"/><path d="M5 361.500a12.500 12.500 0 0 1 12.500 12.500"/></g>
<circle cx="4.500" cy="378.500" r="7" fill="#2a68d8" stroke="#1a40a0" stroke-width=".8"/><path d="M4.500 373.500v1.500M3 377h1.800v5.500M2.500 382.500h4" stroke="#fff" stroke-width="1.600" fill="none"/>
<!-- web page -->
<path d="M1.500 405.500h10.500l5.500 5.500v18h-16z" fill="#f8fbff" stroke="#3a70c0" stroke-width="1"/><path d="M12 405.500v5.500h5.500" fill="#d8e8f8" stroke="#3a70c0" stroke-width="1"/>
<circle cx="9" cy="420.500" r="5.300" fill="#3a90d0" stroke="#1a5090" stroke-width=".7"/><path d="M6 418q2-3 4.500-1.500t.5 4-3 3-2-5.500z" fill="#40b050"/>
<!-- clock -->
<circle cx="9.500" cy="469.500" r="11.500" fill="#d8dce8" stroke="#8890a8" stroke-width="1"/><circle cx="9.500" cy="469.500" r="9" fill="#fff" stroke="#4a5068" stroke-width="1"/><path d="M9.500 463v7h5" fill="none" stroke="#111" stroke-width="1.600"/>
<g stroke="#444" stroke-width="1"><path d="M9.500 461.500v1.500M9.500 476v1.500M1.500 469.500h1.500M16 469.500h1.500"/></g>
<!-- tools -->
<path d="M3 531l9-11" stroke="#8a8a98" stroke-width="2.200"/><path d="M10 517l4-3.500 4.500 1-2 1 2 3.500-3.500 1.500z" fill="#c8c8d4" stroke="#6a6a7a" stroke-width=".8"/>
<path d="M4 523l8 8.500" stroke="#9a9aa8" stroke-width="2"/><path d="M1 519.500q2-2.500 4.500-1l-2 2 1.500 1.500 2-2q1.500 2.500-1 4.500-3 1-5-1z" fill="#b8b8c8" stroke="#6a6a7a" stroke-width=".7"/>
<path d="M0 533.500q3-2 6 0-3 2.500-6 0z" fill="#f09030"/><circle cx="13" cy="532" r="2" fill="#d8d8e0" stroke="#6a6a7a" stroke-width=".7"/>
</svg>
<!-- ===== graphics window ===== -->
<div class="abs" id="gtabline"></div>
<div class="abs" id="gtab"><span style="margin-left:27px">收音机Mini.prt</span></div>
<div class="abs" id="gfx"></div>
<svg width="150" height="24" style="left:355px;top:172px">
 <path d="M7.300 12.800l3.700-6 3.500-2 1.500 2-5 3z" fill="#16284a"/><path d="M8 8.500l15.300 6.700-.8 1.800-15.300-6.700z" fill="#b4e090" stroke="#d8e070" stroke-width=".5"/>
 <path d="M12.800 6.700l3.700-3.400 5.500 6.400-1.900 2.100z" fill="#fff"/><path d="M14.500 8.500l5.500 3 1.500-1.500" fill="none" stroke="#f0c8f0" stroke-width="1"/>
 <path d="M115.500 6h5.500M123.500 12.500v3h-8v-9.500" fill="none" stroke="#fff" stroke-width="1.600"/><path d="M119 12l4.500-4.500M121 6.500h3v3" fill="none" stroke="#fff" stroke-width="1.400"/>
 <path d="M131.500 7l7 7.500M138.500 7l-7 7.500" stroke="#fff" stroke-width="2.300"/>
</svg>
<div class="abs" style="left:366px;top:935px;font-size:12px;line-height:14px;color:#3a3a3a;white-space:nowrap;letter-spacing:.3px">"SHT1"</div>
<div class="abs" style="left:355px;top:195px;width:1px;height:759px;background:#a4a4a4"></div>
<div class="abs" style="left:356px;top:195px;width:916px;height:1px;background:#dfe6e9"></div>
<div class="abs" style="left:1268px;top:196px;width:4px;height:758px;background:#c6c6c6"></div>
<!-- ===== drawing sheet ===== -->
<svg width="917" height="760" style="left:355px;top:195px" viewBox="355 195 917 760">
<defs>
 <g id="oct"><path d="M5.500 0h31.500q.5 4.500 5.500 5.500v31q-5 1-5.500 5.500h-31.500q-.5-4.500-5.500-5.500v-31q5-1 5.500-5.500z" fill="none" stroke="#111" stroke-width="1.500"/><g stroke="#111" stroke-width="1.200"><path d="M2 2l5 5M40.500 2l-5 5M2 40l5-5M40.500 40l-5-5"/></g><g fill="#111"><circle cx="4.500" cy="4.500" r="1.500"/><circle cx="38" cy="4.500" r="1.500"/><circle cx="4.500" cy="37.500" r="1.500"/><circle cx="38" cy="37.500" r="1.500"/></g></g>
 <g id="ostar"><path d="M-4 0h8M0-4v8M-2.800-2.800l5.600 5.600M2.800-2.800l-5.600 5.600" stroke="#111" stroke-width="1.300"/></g>
 <path id="arw" d="M0 0l-12-2.300v4.600z" fill="#111"/>
</defs>
<g fill="none" stroke="#555" stroke-width="1" stroke-dasharray="8 8"><path d="M368.500 259.800V889.200"/><path d="M368.200 889.200H1259.500"/><path d="M374 258.600H1259.500"/><path d="M1259.500 268.700V889"/><path d="M1259.500 258.600v2.500" stroke-dasharray="none"/></g>
<!-- bottom view (top centre) -->
<g fill="none" stroke="#111">
 <path d="M749.500 327v6" stroke-width=".8"/>
 <path d="M749.700 412.800v-80.600h129v80.600" stroke-width="1.600"/>
 <path d="M746 412.800h134" stroke-width="1.600"/>
 <path d="M750 345.500h67.500v67" stroke="#555" stroke-width=".9"/>
</g>
<use href="#oct" x="821" y="351"/>
<use href="#arw" x="881" y="412.800"/><use href="#ostar" x="749.700" y="412.800"/>
<!-- isometric -->
<g fill="none" stroke="#222" stroke-width=".8">
 <path d="M1028.500 311v74M1076 311v93"/>
 <path d="M1028.500 322l20.500-11M1028.500 322l70 40"/>
 <path d="M1029 377l92-53"/>
 <path d="M1076 404l47-27"/>
 <path d="M1029 349l90 51" stroke-dasharray="3 1"/>
</g>
<g fill="none" stroke="#111" stroke-width="1.600" stroke-linejoin="round">
 <path d="M1028.500 378v-28.500q0-1.500 1.500-2.500l51-30q2-1.200 4 0l89 51q2.500 1.500 2.500 4v25q0 2-1.500 3l-54 29q-2 1-2-1.500v-23q0-3 2.500-4.500l53-30"/>
 <path d="M1028.500 378l90 50.500" stroke-width="2.200" stroke-dasharray="2 .8"/>
 <path d="M1099 366l20-11.500q2.500-1.300 5 0l22.500 13q2 1.500 0 3l-19.500 11.500q-2.500 1.300-5 0l-22.500-13q-2-1.500-.5-3z"/>
 <path d="M1102 367.500l18-10.500q2-1 4 0l19.500 11.500" stroke-width="1"/>
 <path d="M1113 361l22 13.500M1102 367.500l22 13" stroke-width="1.100"/>
</g>
<g fill="none" stroke="#111" stroke-width="1.300"><ellipse cx="1167" cy="387.500" rx="4" ry="5.500" transform="rotate(25 1167 387.500)"/><path d="M1164 391l6-7"/><ellipse cx="1156" cy="394" rx="1.800" ry="2.500" transform="rotate(25 1156 394)"/><ellipse cx="1133.800" cy="407" rx="2.800" ry="4" transform="rotate(25 1133.800 407)"/><path d="M1132 410l3.500-6"/></g>
<g fill="#111"><circle cx="1143" cy="410" r="1"/><circle cx="1128" cy="419" r="1"/><path d="M1121 324l-11 3 3 5z"/><path d="M1119.500 429l-10-3 2-3.500z"/></g>
<path d="M1024 378h9M1028.500 373.500v9" stroke="#111" stroke-width="1.600"/>
<text x="1123.500" y="325" font-family="Liberation Sans,sans-serif" font-size="11" fill="#222">Y</text>
<path d="M1125 430.500l2.500 2.500 3-3" fill="none" stroke="#333" stroke-width=".9"/>
<!-- left view -->
<g fill="none" stroke="#111">
 <path d="M498.500 551v41.500M566.500 551v6M479.500 592.500h5" stroke-width=".8"/>
 <rect x="484" y="555.200" width="82.500" height="37.300" rx="4.500" stroke-width="1.600"/>
 <circle cx="497.200" cy="574" r="2.300" stroke-width="1.200"/>
</g>
<use href="#ostar" x="566.500" y="592.500"/>
<!-- front view -->
<g fill="none" stroke="#111">
 <path d="M749.700 551v5" stroke-width=".8"/><path d="M817.300 555.500v37" stroke="#555" stroke-width=".9"/>
 <path d="M749.700 592.500v-37.300h128.700v37.300" stroke-width="1.600"/><path d="M746 592.500h134" stroke-width="1.600"/>
</g>
<use href="#arw" x="881" y="592.500"/><use href="#ostar" x="749.700" y="592.500"/><path d="M749.700 597l-2.500-5h5z" fill="#111"/>
<!-- right view -->
<g fill="none" stroke="#111">
 <path d="M1061.400 551v5M1129.500 551v41.500M1143 592.500h5" stroke-width=".8"/>
 <rect x="1061.400" y="555.200" width="82.400" height="37" rx="4.500" stroke-width="1.600"/>
 <circle cx="1083.300" cy="574" r="4.800" stroke-width="1.300"/><circle cx="1114.500" cy="574" r="3.300" stroke-width="1.300"/>
 <circle cx="1130.700" cy="574" r="7.300" stroke-width="1.400"/><circle cx="1130.700" cy="574" r="3" stroke-width="1.200"/>
 <path d="M1077 574h13M1083.300 567.500v13M1109.500 574h10M1114.500 569v10M1121.500 574h18M1130.700 565v18" stroke-width=".6"/>
 <path d="M1071 584.500h7M1074.300 581v7M1092.500 584.500h7M1096 581v7" stroke-width="1.100"/>
</g>
<use href="#ostar" x="1061.400" y="592"/>
<!-- top view -->
<g fill="none" stroke="#111">
 <path d="M749.700 816v5" stroke-width=".8"/>
 <path d="M817 735v67.300h-67" stroke="#555" stroke-width=".9"/>
 <rect x="749.700" y="734.500" width="129" height="81.500" rx="1" stroke-width="1.600"/>
 <rect x="754.400" y="739.700" width="119.200" height="72" rx="1.500" stroke-width="1.500"/>
 <path d="M746 734.500h134" stroke-width="1.600"/>
</g>
<use href="#oct" x="821" y="754.300"/>
<use href="#arw" x="881" y="734.500"/><use href="#ostar" x="749.700" y="734.500"/>
</svg>
<!-- ===== status / taskbar / watermark ===== -->
<div class="abs" id="status"><span style="margin-left:-6px">选择对象并使用 MB3，或双击，或按住并拖动来移动视图、尺寸或注释</span></div>
<div class="abs" id="taskbar"></div>
<div class="abs" style="left:0;top:977px;width:36px;height:16px;border-radius:18px 18px 0 0;background:radial-gradient(ellipse at 50% 100%,#cfe4f4,#7aa8d0 60%,#3a6aa0)"></div>
<div class="abs" style="left:299px;top:977px;width:59px;height:8px;background:linear-gradient(90deg,#a8c8e8,#7aa8d8);border:1px solid #d8e8f8;border-bottom:none;border-radius:2px 2px 0 0"></div>
<div class="abs" style="left:361px;top:977px;width:59px;height:8px;background:linear-gradient(90deg,#b8d4ee,#7aa8d8);border:1px solid #d8e8f8;border-bottom:none;border-radius:2px 2px 0 0"></div>
<div class="abs" style="left:423px;top:977px;width:59px;height:8px;background:linear-gradient(90deg,#a8c8e8,#7aa8d8);border:1px solid #d8e8f8;border-bottom:none;border-radius:2px 2px 0 0"></div>
<div class="abs" style="left:485px;top:977px;width:59px;height:8px;background:linear-gradient(90deg,#b8d4ee,#7aa8d8);border:1px solid #d8e8f8;border-bottom:none;border-radius:2px 2px 0 0"></div>
<div class="abs" style="left:316px;top:979px;width:24px;height:12px;border-radius:12px 12px 0 0;background:#e83030"></div>
<div class="abs" style="left:378px;top:978px;width:16px;height:8px;background:#e84070;clip-path:polygon(0 0,100% 0,70% 100%,30% 100%)"></div>
<div class="abs" style="left:440px;top:978px;width:26px;height:12px;border-radius:13px 13px 0 0;background:#111"></div>
<div class="abs" style="left:501px;top:979px;width:30px;height:8px;background:#1a9a7a;border:1px solid #e8f4f0"></div>
<div class="abs" style="left:67px;top:982px;width:18px;height:4px;background:#f4f8f4"></div>
<div class="abs" style="left:136px;top:979px;width:22px;height:10px;border:2px solid #f0c820;border-radius:50%;transform:rotate(-20deg)"></div>
<div class="abs" style="left:193px;top:980px;width:16px;height:6px;background:#f8f8f8"></div>
<div class="abs" style="left:256px;top:979px;width:20px;height:12px;border-radius:10px 10px 0 0;background:#f0f0f0;border:2px solid #222"></div>
<div class="abs" style="left:1234px;top:977px;width:38px;height:8px;background:linear-gradient(#7aa0c8,#3a6a9a);border-left:1px solid #9ab8d8"></div>
<div class="abs" id="rightstrip"></div>
<div class="abs" style="left:1272px;top:892px;width:9px;height:93px;background:#000"></div>
<div class="abs" style="left:1272px;top:0;width:9px;height:20px;background:linear-gradient(100deg,#dcdcdc 40%,#f2f2f2 60%)"></div>
<div class="abs" style="left:1272px;top:56px;width:9px;height:1px;background:#d8d8d8"></div>
<div class="abs" style="left:1115.500px;top:921.500px;width:162px;font-size:27.500px;font-weight:900;line-height:40px;transform:scaleX(1.135);transform-origin:0 0;color:#0d4a8c;-webkit-text-stroke:1px #0d4a8c;white-space:nowrap;letter-spacing:0;text-shadow:0 0 2px #fff,1px 1px 0 #fff,-1px -1px 0 #fff,1px -1px 0 #fff,-1px 1px 0 #fff">矿石收音机</div>
<div class="abs" style="left:1116px;top:962.500px;font-size:16px;font-weight:bold;line-height:20px;color:#0c3878;white-space:nowrap;letter-spacing:.2px;text-shadow:0 0 2px #fff,1px 1px 0 #fff,-1px -1px 0 #fff,1px -1px 0 #fff,-1px 1px 0 #fff,0 2px 0 #fff,2px 0 0 #fff,-2px 0 0 #fff,0 -2px 0 #fff">www.crystalradio.cn</div>
</body>
</html>
